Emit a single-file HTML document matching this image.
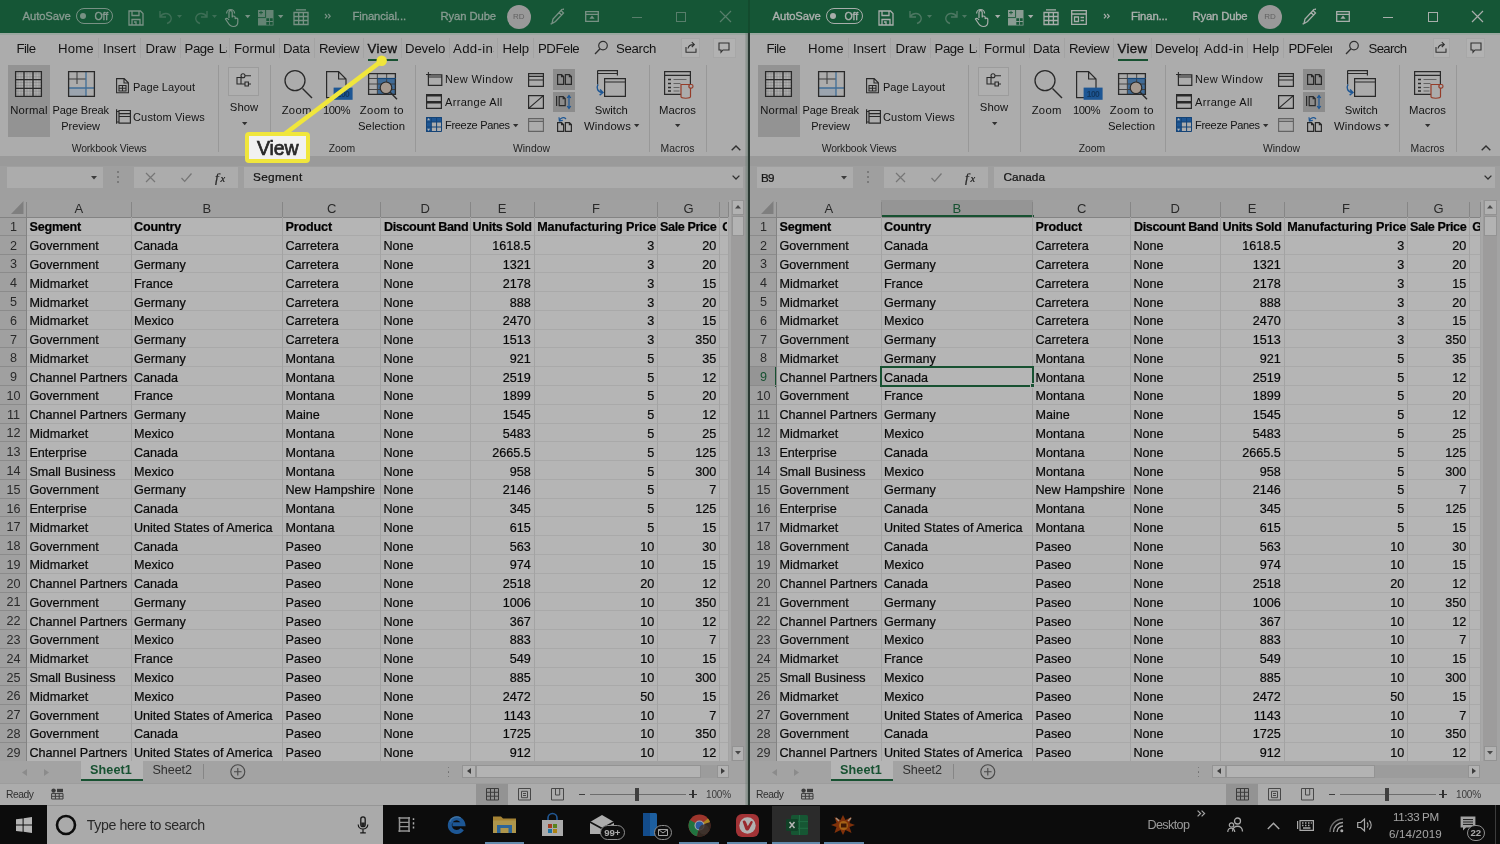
<!DOCTYPE html>
<html lang="en"><head><meta charset="utf-8"><title>Excel View Side by Side</title>
<style>
html,body{margin:0;padding:0;background:#000;}
body{width:1500px;height:844px;overflow:hidden;font-family:"Liberation Sans",sans-serif;}
#root{will-change:transform;position:relative;width:1500px;height:844px;overflow:hidden;background:#e6e6e6;}
.win{position:absolute;top:0;height:805px;overflow:hidden;background:#e6e6e6;}
.b{position:absolute;display:block;}
.t{position:absolute;white-space:nowrap;line-height:1;color:#262626;}
.ui{color:#1c1c1c;}
.g{color:#000;-webkit-text-stroke:0.22px #111;}
svg{overflow:visible}
</style></head><body><div id="root">
<div class="win" style="left:0px;width:748px">
<div class="b " style="left:0.00px;top:0.00px;width:748.00px;height:33.00px;background:#1e7a4c;"></div>
<span class="t " style="top:11.30px;font-size:11.30px;left:22.50px;letter-spacing:-0.094px;color:rgba(255,255,255,0.62);-webkit-text-stroke:0.3px rgba(255,255,255,0.62);">AutoSave</span>
<div class="b " style="left:76.30px;top:7.80px;width:37.20px;height:16.20px;border:1.600px solid rgba(255,255,255,0.62);border-radius:9px;box-sizing:border-box;"></div>
<div class="b " style="left:79.80px;top:12.90px;width:6.00px;height:6.00px;background:rgba(255,255,255,0.62);border-radius:50%;"></div>
<span class="t " style="top:11.47px;font-size:10.50px;left:94.50px;letter-spacing:-0.104px;color:rgba(255,255,255,0.62);-webkit-text-stroke:0.3px rgba(255,255,255,0.62);">Off</span>
<svg class="b" style="left:128.00px;top:9.50px;" width="16" height="16" viewBox="0 0 16 16"><path d="M1 1h11.5l2.5 2.5V15H1z M4 1v4.5h7V1 M4 15V9.5h8V15 M6 12h2v3" fill="none" stroke="rgba(255,255,255,0.62)" stroke-width="1.3"/></svg>
<svg class="b" style="left:158.00px;top:9.00px;" width="16" height="16" viewBox="0 0 16 16"><path d="M2 2v6h6 M2.5 7.5C5 3.5 11 3.5 13 8c1 3-1 5.5-4 6.5" fill="none" stroke="rgba(255,255,255,0.25)" stroke-width="1.4"/></svg>
<svg class="b" style="left:177.00px;top:14.50px;" width="6" height="4" viewBox="0 0 6 4"><path d="M0 0h5l-2.5 3z" fill="rgba(255,255,255,0.25)"/></svg>
<svg class="b" style="left:193.00px;top:9.00px;" width="16" height="16" viewBox="0 0 16 16"><path d="M14 2v6H8 M13.5 7.5C11 3.5 5 3.5 3 8c-1 3 1 5.5 4 6.5" fill="none" stroke="rgba(255,255,255,0.25)" stroke-width="1.4"/></svg>
<svg class="b" style="left:212.00px;top:14.50px;" width="6" height="4" viewBox="0 0 6 4"><path d="M0 0h5l-2.5 3z" fill="rgba(255,255,255,0.25)"/></svg>
<svg class="b" style="left:224.00px;top:9.00px;" width="14" height="18" viewBox="0 0 14 18"><path d="M5 9V3.2a1.6 1.6 0 0 1 3.2 0V8 M8.2 8.5a1.5 1.5 0 0 1 3 0V10a1.4 1.4 0 0 1 2.6 0v3c0 3-1.6 4.5-4.4 4.5S5 15.5 3.6 13.2L1.5 10c1-1.2 2.6-.6 3.5 1 M2.6 4.5a4 4 0 0 1 8 0" fill="none" stroke="rgba(255,255,255,0.62)" stroke-width="1.2"/></svg>
<svg class="b" style="left:245.00px;top:14.50px;" width="6" height="4" viewBox="0 0 6 4"><path d="M0 0h5.4l-2.7 3.2z" fill="rgba(255,255,255,0.62)"/></svg>
<svg class="b" style="left:257.50px;top:9.50px;" width="15.5" height="15.5" viewBox="0 0 15.5 15.5"><path d="M0 0h15.5v15.5H0z" fill="rgba(255,255,255,0.62)" opacity=".8"/><path d="M8.300 8.300h2.800v2.800H8.300z M11.900 8.300h2.800v2.800h-2.800z M8.300 11.900h2.800v2.800H8.300z M11.900 11.900h2.800v2.800h-2.800z" fill="#1e7a4c"/><path d="M1 2.600h4 M3 .8v3.600 M7.600 0v7.600H0" fill="none" stroke="#1e7a4c" stroke-width=".9"/></svg>
<svg class="b" style="left:278.00px;top:14.50px;" width="6" height="4" viewBox="0 0 6 4"><path d="M0 0h5.4l-2.7 3.2z" fill="rgba(255,255,255,0.62)"/></svg>
<svg class="b" style="left:293.00px;top:9.00px;" width="16" height="16" viewBox="0 0 16 16"><path d="M1 3.5h14v12H1z M1 7.5h14 M1 11.5h14 M5.7 3.5v12 M10.4 3.5v12 M3 .8h10" fill="none" stroke="rgba(255,255,255,0.62)" stroke-width="1.3"/></svg>
<svg class="b" style="left:325.00px;top:14.00px;" width="7" height="5" viewBox="0 0 7 5"><path d="M0 0l2 2.2L0 4.4 M3.2 0l2 2.2-2 2.2" fill="none" stroke="rgba(255,255,255,0.62)" stroke-width="1.2"/></svg>
<span class="t " style="top:11.30px;font-size:11.30px;left:352.50px;letter-spacing:-0.095px;color:rgba(255,255,255,0.62);-webkit-text-stroke:0.3px rgba(255,255,255,0.62);">Financial...</span>
<span class="t " style="top:11.30px;font-size:11.30px;left:440.50px;letter-spacing:-0.115px;color:rgba(255,255,255,0.62);-webkit-text-stroke:0.3px rgba(255,255,255,0.62);">Ryan Dube</span>
<div class="b " style="left:506.75px;top:4.50px;width:24.00px;height:24.00px;background:#d8d8d8;border-radius:50%;"></div>
<span class="t " style="top:13.12px;font-size:8.00px;left:518.75px;transform:translateX(-50%);color:#8a8a8a;">RD</span>
<svg class="b" style="left:549.00px;top:8.00px;" width="16" height="17" viewBox="0 0 16 17"><path d="M3 15.5l1-4.5L12 2.5l2.5 2.5L6.5 13.5z M10 4.5l2.5 2.5 M1.5 16l3-1 M12.5 1l.8 1.2 M14.5 .5l-.3 1.4" fill="none" stroke="rgba(255,255,255,0.62)" stroke-width="1.3"/></svg>
<svg class="b" style="left:584.50px;top:11.00px;" width="14" height="11" viewBox="0 0 14 11"><path d="M.7 .7h12.6v9.6H.7z M.7 3.4h12.6" fill="none" stroke="rgba(255,255,255,0.62)" stroke-width="1.3"/><path d="M7 4.6l2.6 3.2H4.4z" fill="rgba(255,255,255,0.62)"/></svg>
<div class="b " style="left:632.00px;top:16.50px;width:10.00px;height:1.20px;background:rgba(255,255,255,0.42);"></div>
<div class="b " style="left:676.00px;top:11.50px;width:10.00px;height:10.00px;border:1.2px solid rgba(255,255,255,0.42);box-sizing:border-box;"></div>
<svg class="b" style="left:720.25px;top:11.00px;" width="11" height="11" viewBox="0 0 11 11"><path d="M0 0l11 11M11 0L0 11" stroke="rgba(255,255,255,0.42)" stroke-width="1.2"/></svg>
<div class="b " style="left:0.00px;top:33.00px;width:748.00px;height:29.00px;background:#f3f3f3;"></div>
<div class="b " style="left:0.00px;top:33.00px;width:748.00px;height:1.60px;background:#d9ece2;"></div>
<span class="t ui" style="top:42.23px;font-size:13.20px;left:16.50px;letter-spacing:-0.568px;">File</span>
<span class="t ui" style="top:42.23px;font-size:13.20px;left:58.00px;letter-spacing:0.134px;">Home</span>
<span class="t ui" style="top:42.23px;font-size:13.20px;left:103.00px;letter-spacing:-0.002px;">Insert</span>
<span class="t ui" style="top:42.23px;font-size:13.20px;left:145.50px;letter-spacing:-0.076px;">Draw</span>
<div class="b" style="left:0;top:0;width:227.00px;height:844px;overflow:hidden">
<span class="t ui" style="top:42.23px;font-size:13.20px;left:184.50px;letter-spacing:-0.382px;word-spacing:1.7px;">Page Layout</span>
</div>
<div class="b" style="left:0;top:0;width:275.00px;height:844px;overflow:hidden">
<span class="t ui" style="top:42.23px;font-size:13.20px;left:234.00px;letter-spacing:0.038px;">Formulas</span>
</div>
<span class="t ui" style="top:42.23px;font-size:13.20px;left:283.00px;letter-spacing:-0.221px;">Data</span>
<span class="t ui" style="top:42.23px;font-size:13.20px;left:319.00px;letter-spacing:-0.547px;">Review</span>
<span class="t ui" style="top:42.23px;font-size:13.20px;left:367.50px;letter-spacing:0.407px;-webkit-text-stroke:0.35px #1c1c1c;">View</span>
<div class="b" style="left:0;top:0;width:445.60px;height:844px;overflow:hidden">
<span class="t ui" style="top:42.23px;font-size:13.20px;left:405.00px;letter-spacing:-0.132px;">Developer</span>
</div>
<div class="b" style="left:0;top:0;width:493.60px;height:844px;overflow:hidden">
<span class="t ui" style="top:42.23px;font-size:13.20px;left:453.00px;letter-spacing:0.357px;">Add-ins</span>
</div>
<span class="t ui" style="top:42.23px;font-size:13.20px;left:502.50px;letter-spacing:-0.162px;">Help</span>
<div class="b" style="left:0;top:0;width:579.60px;height:844px;overflow:hidden">
<span class="t ui" style="top:42.23px;font-size:13.20px;left:538.00px;letter-spacing:-0.453px;">PDFelement</span>
</div>
<div class="b " style="left:98.00px;top:38.00px;width:1.00px;height:20.00px;background:rgba(0,0,0,0.05);"></div>
<div class="b " style="left:140.00px;top:38.00px;width:1.00px;height:20.00px;background:rgba(0,0,0,0.05);"></div>
<div class="b " style="left:180.00px;top:38.00px;width:1.00px;height:20.00px;background:rgba(0,0,0,0.05);"></div>
<div class="b " style="left:229.00px;top:38.00px;width:1.00px;height:20.00px;background:rgba(0,0,0,0.05);"></div>
<div class="b " style="left:279.00px;top:38.00px;width:1.00px;height:20.00px;background:rgba(0,0,0,0.05);"></div>
<div class="b " style="left:314.00px;top:38.00px;width:1.00px;height:20.00px;background:rgba(0,0,0,0.05);"></div>
<div class="b " style="left:363.00px;top:38.00px;width:1.00px;height:20.00px;background:rgba(0,0,0,0.05);"></div>
<div class="b " style="left:401.00px;top:38.00px;width:1.00px;height:20.00px;background:rgba(0,0,0,0.05);"></div>
<div class="b " style="left:449.00px;top:38.00px;width:1.00px;height:20.00px;background:rgba(0,0,0,0.05);"></div>
<div class="b " style="left:497.00px;top:38.00px;width:1.00px;height:20.00px;background:rgba(0,0,0,0.05);"></div>
<div class="b " style="left:533.00px;top:38.00px;width:1.00px;height:20.00px;background:rgba(0,0,0,0.05);"></div>
<div class="b " style="left:367.50px;top:58.70px;width:30.00px;height:2.80px;background:#217346;"></div>
<svg class="b" style="left:594.00px;top:40.00px;" width="15" height="15" viewBox="0 0 15 15"><circle cx="9" cy="5.6" r="4.3" fill="none" stroke="#444" stroke-width="1.2"/><path d="M6 8.8L1 14" stroke="#444" stroke-width="1.3"/></svg>
<span class="t ui" style="top:41.93px;font-size:13.20px;left:616.00px;letter-spacing:-0.304px;">Search</span>
<div class="b " style="left:681.00px;top:37.50px;width:19.00px;height:20.00px;background:#fbfbfb;border:1px solid #ececec;box-sizing:border-box;"></div>
<svg class="b" style="left:684.50px;top:41.00px;" width="12" height="12" viewBox="0 0 12 12"><path d="M1 6v5.3h10V7.5 M3 7.5C3.5 4.5 6 3.6 8.5 3.6 M6.8 1.2L9.3 3.6 6.8 6" fill="none" stroke="#444" stroke-width="1.1"/></svg>
<div class="b " style="left:712.50px;top:37.50px;width:23.50px;height:20.00px;background:#fbfbfb;border:1px solid #ececec;box-sizing:border-box;"></div>
<svg class="b" style="left:718.25px;top:41.50px;" width="12" height="12" viewBox="0 0 12 12"><path d="M1 1h10v7H5L3 10.3V8H1z" fill="none" stroke="#444" stroke-width="1.1"/></svg>
<div class="b " style="left:0.00px;top:62.00px;width:748.00px;height:93.50px;background:#f3f3f3;"></div>
<div class="b " style="left:8.00px;top:65.30px;width:42.00px;height:71.50px;background:#d0d0d0;"></div>
<svg class="b" style="left:15.30px;top:71.30px;" width="27" height="26" viewBox="0 0 27 26"><rect x="0" y="0" width="27" height="26" fill="#f6f6f6"/><path d="M3 0v26 M0 2.88889h27" stroke="#a8a8a8" stroke-width=".4"/><path d="M6 0v26 M0 5.77778h27" stroke="#a8a8a8" stroke-width=".4"/><path d="M9 0v26 M0 8.66667h27" stroke="#a8a8a8" stroke-width=".4"/><path d="M12 0v26 M0 11.5556h27" stroke="#a8a8a8" stroke-width=".4"/><path d="M15 0v26 M0 14.4444h27" stroke="#a8a8a8" stroke-width=".4"/><path d="M18 0v26 M0 17.3333h27" stroke="#a8a8a8" stroke-width=".4"/><path d="M21 0v26 M0 20.2222h27" stroke="#a8a8a8" stroke-width=".4"/><path d="M24 0v26 M0 23.1111h27" stroke="#a8a8a8" stroke-width=".4"/><path d="M.6 .6h25.8v24.8H.6z M9 0v26 M18 0v26 M0 8.7h27 M0 17.3h27" fill="none" stroke="#3b3b3b" stroke-width="1.3"/></svg>
<span class="t ui" style="top:104.80px;font-size:11.30px;left:10.30px;letter-spacing:0.147px;">Normal</span>
<svg class="b" style="left:67.50px;top:71.30px;" width="27" height="26" viewBox="0 0 27 26"><rect width="27" height="26" fill="#f2f2f2"/><path d="M9 0v13 M0 8h18" stroke="#555" stroke-width="1"/><path d="M0 17h18v9H0z" fill="#dbe8f5"/><path d="M18 0v26 M0 17h27" stroke="#5b9bd5" stroke-width="1.300"/><path d="M.6 .6h25.8v24.8H.6z" fill="none" stroke="#3b3b3b" stroke-width="1.3"/></svg>
<span class="t ui" style="top:104.94px;font-size:11.00px;left:52.50px;letter-spacing:-0.098px;">Page Break</span>
<span class="t ui" style="top:120.74px;font-size:11.00px;left:61.30px;letter-spacing:-0.061px;">Preview</span>
<svg class="b" style="left:116.00px;top:78.00px;" width="13" height="15.5" viewBox="0 0 13 15.5"><path d="M.6 .6h7.6l4.2 4.2v10H.6z M8 .6v4.4h4.4 M3 7.5h7v5.5H3z M3 10.2h7 M6.5 7.5v5.5" fill="none" stroke="#3b3b3b" stroke-width="1.1"/></svg>
<span class="t ui" style="top:81.64px;font-size:11.00px;left:133.00px;letter-spacing:0.021px;">Page Layout</span>
<svg class="b" style="left:115.50px;top:109.00px;" width="15" height="15" viewBox="0 0 15 15"><path d="M3 1.5h11.4v12.6H3z M3 4.6h11.4 M3 7.5h11.4 M.6 .2v14.6 M.6 2.5H3 M.6 13H3" fill="none" stroke="#3b3b3b" stroke-width="1.2"/></svg>
<span class="t ui" style="top:111.64px;font-size:11.00px;left:133.00px;letter-spacing:0.158px;">Custom Views</span>
<span class="t ui" style="top:144.02px;font-size:10.40px;left:71.70px;letter-spacing:-0.148px;color:#333;">Workbook Views</span>
<div class="b " style="left:218.00px;top:65.00px;width:1.00px;height:87.00px;background:#d6d6d6;"></div>
<div class="b " style="left:228.00px;top:66.70px;width:31.00px;height:29.00px;background:#f7f7f7;border:1px solid #dcdcdc;box-sizing:border-box;"></div>
<svg class="b" style="left:236.00px;top:73.00px;" width="16" height="15" viewBox="0 0 16 15"><path d="M1 4.5h4V11H1z M5 2.8a2 2 0 1 0 4 0 2 2 0 1 0-4 0 M9.5 2.8H15 M5 11h4 M9 9h3.4v4H9z M12.6 11H15" fill="none" stroke="#3b3b3b" stroke-width="1.1"/></svg>
<span class="t ui" style="top:102.30px;font-size:11.30px;left:244.00px;transform:translateX(-50%);">Show</span>
<svg class="b" style="left:241.50px;top:121.50px;" width="5.4" height="3.4" viewBox="0 0 5.4 3.4"><path d="M0 0h5.4L2.7 3.2z" fill="#444"/></svg>
<div class="b " style="left:269.50px;top:65.00px;width:1.00px;height:87.00px;background:#d6d6d6;"></div>
<svg class="b" style="left:281.00px;top:68.00px;" width="33" height="33" viewBox="0 0 33 33"><circle cx="14" cy="12.6" r="10" fill="none" stroke="#3b3b3b" stroke-width="1.3"/><path d="M21.5 20.5L31 30" stroke="#3b3b3b" stroke-width="1.4"/></svg>
<span class="t ui" style="top:104.80px;font-size:11.30px;left:281.70px;letter-spacing:0.279px;">Zoom</span>
<svg class="b" style="left:325.80px;top:70.80px;" width="26" height="30" viewBox="0 0 26 30"><path d="M.6 .6h12l7.4 7.4v18.6H.6z M12.6 .6v7.4h7.4" fill="none" stroke="#3b3b3b" stroke-width="1.2"/><rect x="7.600" y="16.600" width="19" height="12.200" fill="#2a7ad1"/><text x="17" y="26" font-size="8.500" font-weight="700" text-anchor="middle" fill="#1a4f88" font-family="Liberation Sans, sans-serif" letter-spacing="-.5">100</text></svg>
<span class="t ui" style="top:104.80px;font-size:11.30px;left:323.00px;letter-spacing:-0.475px;">100%</span>
<svg class="b" style="left:368.00px;top:73.00px;" width="30" height="27" viewBox="0 0 30 27"><rect width="28" height="22" fill="#efefef"/><rect x="9.300" y="5.500" width="18.700" height="16.500" fill="#5b97d4"/><path d="M9.333 0v22" stroke="#555" stroke-width=".9"/><path d="M18.666 0v22" stroke="#555" stroke-width=".9"/><path d="M0 5.5h28" stroke="#555" stroke-width=".9"/><path d="M0 11h28" stroke="#555" stroke-width=".9"/><path d="M0 16.5h28" stroke="#555" stroke-width=".9"/><path d="M.6 .6h26.8v20.800H.6z" fill="none" stroke="#3b3b3b" stroke-width="1.300"/><path d="M9.300 5.500H28" fill="none" stroke="#1e64ad" stroke-width="1.200"/><circle cx="18" cy="14.800" r="5.800" fill="#ead8c8" stroke="#3b3b3b" stroke-width="1.200"/><path d="M22.200 19.200l6.800 7" stroke="#3b3b3b" stroke-width="1.400"/></svg>
<span class="t ui" style="top:104.80px;font-size:11.30px;left:359.70px;letter-spacing:0.407px;">Zoom to</span>
<span class="t ui" style="top:120.60px;font-size:11.30px;left:358.00px;letter-spacing:0.057px;">Selection</span>
<span class="t ui" style="top:144.02px;font-size:10.40px;left:328.80px;letter-spacing:-0.096px;color:#333;">Zoom</span>
<div class="b " style="left:415.00px;top:65.00px;width:1.00px;height:87.00px;background:#d6d6d6;"></div>
<svg class="b" style="left:425.50px;top:71.50px;" width="16.5" height="14" viewBox="0 0 16.5 14"><path d="M2.4 2.8h13.4v10.5H2.4z M2.4 5h13.4" fill="none" stroke="#3b3b3b" stroke-width="1.2"/><path d="M2.4 0v5 M0 2.5h5" stroke="#3b3b3b" stroke-width="1"/></svg>
<span class="t ui" style="top:74.24px;font-size:11.00px;left:445.00px;letter-spacing:0.381px;">New Window</span>
<svg class="b" style="left:426.00px;top:94.00px;" width="16" height="15" viewBox="0 0 16 15"><path d="M.6 .6h14.8v13.8H.6z M.6 7.5h14.8" fill="none" stroke="#3b3b3b" stroke-width="1.2"/><path d="M.6 1.6h14.8 M.6 8.6h14.8" stroke="#3b3b3b" stroke-width="2"/></svg>
<span class="t ui" style="top:96.94px;font-size:11.00px;left:445.00px;letter-spacing:0.335px;">Arrange All</span>
<svg class="b" style="left:426.00px;top:116.50px;" width="16" height="15" viewBox="0 0 16 15"><rect x="0" y="0" width="16" height="15" fill="#f4f4f4"/><rect x="0" y="0" width="16" height="5" fill="#2a7ad1"/><rect x="0" y="0" width="5.3" height="15" fill="#2a7ad1"/><path d="M5.3 0v15 M10.6 0v15 M0 5h16 M0 10h16" stroke="#1d5fa6" stroke-width="1"/><path d="M.5 .5h15v14H.5z" fill="none" stroke="#1d5fa6" stroke-width="1"/><path d="M1.2 3.3l1.4-2.2 1.4 2.2z M1.2 11.7l1.4 2.2 1.4-2.2z" fill="#fff"/></svg>
<span class="t ui" style="top:119.94px;font-size:11.00px;left:445.00px;letter-spacing:-0.307px;">Freeze Panes</span>
<svg class="b" style="left:513.00px;top:123.50px;" width="5.4" height="3.4" viewBox="0 0 5.4 3.4"><path d="M0 0h5.4L2.7 3.2z" fill="#444"/></svg>
<svg class="b" style="left:527.50px;top:72.50px;" width="16" height="14" viewBox="0 0 16 14"><path d="M.6 .6h14.8v12.8H.6z M.6 3.4h14.8 M.6 7h14.8" fill="none" stroke="#3b3b3b" stroke-width="1.2"/></svg>
<svg class="b" style="left:527.50px;top:95.00px;" width="16" height="14" viewBox="0 0 16 14"><path d="M.6 .6h14.8v12.8H.6z M.6 13.4L15.4 .6" fill="none" stroke="#3b3b3b" stroke-width="1.2"/></svg>
<svg class="b" style="left:527.50px;top:118.00px;" width="16" height="14" viewBox="0 0 16 14"><path d="M.6 .6h14.8v12.8H.6z M.6 3.4h14.8" fill="none" stroke="#8c8c8c" stroke-width="1.1"/></svg>
<div class="b " style="left:553.00px;top:69.00px;width:22.00px;height:20.50px;background:#c6c6c6;"></div>
<div class="b " style="left:553.00px;top:91.50px;width:22.00px;height:20.50px;background:#c6c6c6;"></div>
<svg class="b" style="left:557.00px;top:74.00px;" width="15" height="11" viewBox="0 0 15 11"><path d="M.6 .6h4l2 2v7.8H.6z M8.4 .6h4l2 2v7.8H8.4z M4.6 .6v2h2 M12.4 .6v2h2" fill="none" stroke="#3b3b3b" stroke-width="1.2"/></svg>
<svg class="b" style="left:556.00px;top:95.00px;" width="17" height="14" viewBox="0 0 17 14"><path d="M.6 1v10 M3.2 1.6h4l2 2v7H3.2z M7.2 1.6v2h2" fill="none" stroke="#3b3b3b" stroke-width="1.2"/><path d="M13 1v12 M11.2 3l1.8-2.4L14.8 3 M11.2 11l1.8 2.4 1.8-2.4" fill="none" stroke="#2a7ad1" stroke-width="1.2"/></svg>
<svg class="b" style="left:556.50px;top:116.00px;" width="16" height="16" viewBox="0 0 16 16"><path d="M.6 6.6h4l2 2v6.8H.6z M8.4 6.6h4l2 2v6.8H8.4z M4.6 6.6v2h2 M12.4 6.6v2h2" fill="none" stroke="#3b3b3b" stroke-width="1.2"/><path d="M2.5 4.8C3 1.5 7 .8 9 3 M2 1.2l.4 3.8 3.4-.6" fill="none" stroke="#2a7ad1" stroke-width="1.2"/></svg>
<svg class="b" style="left:595.00px;top:70.00px;" width="31" height="29" viewBox="0 0 31 29"><path d="M2.6 .6h19.8v5 M2.6 .6v14 M2.6 3.5h19.8" fill="none" stroke="#3b3b3b" stroke-width="1.2"/><path d="M9.6 8.6h20.8v17.8H9.6z M9.6 12h20.8" fill="#f1f1f1" stroke="#3b3b3b" stroke-width="1.2"/><path d="M3 14.5C1 18 2.5 22 7.5 22.5 M5 19.5l3 3-3.4 2.6" fill="none" stroke="#2a7ad1" stroke-width="1.4"/></svg>
<span class="t ui" style="top:104.80px;font-size:11.30px;left:594.80px;letter-spacing:-0.064px;">Switch</span>
<span class="t ui" style="top:120.60px;font-size:11.30px;left:584.00px;letter-spacing:0.166px;">Windows</span>
<svg class="b" style="left:634.30px;top:124.30px;" width="5.4" height="3.4" viewBox="0 0 5.4 3.4"><path d="M0 0h5.4L2.7 3.2z" fill="#444"/></svg>
<span class="t ui" style="top:144.02px;font-size:10.40px;left:513.00px;letter-spacing:0.002px;color:#333;">Window</span>
<div class="b " style="left:648.50px;top:65.00px;width:1.00px;height:87.00px;background:#d6d6d6;"></div>
<svg class="b" style="left:663.50px;top:71.00px;" width="30" height="29" viewBox="0 0 30 29"><path d="M.6 .6h25.8v22.8H.6z M.6 4.4h25.8" fill="none" stroke="#3b3b3b" stroke-width="1.2"/><path d="M4 8.5h3 M4 12.5h3 M4 16.5h3 M4 20h3" stroke="#3b3b3b" stroke-width="1.3"/><path d="M9.5 8.5h13 M9.5 12.5h7 M9.5 16.5h6 M9.5 20h6" stroke="#8a8a8a" stroke-width="1"/><path d="M17 13.5h10.5c2 0 2 3.6 0 3.6h-1v8.5c0 2.2-9.5 2.2-9.5 0z M26 13.6c-1.6 0-1.6 3.4 0 3.5" fill="#f3f3f3" stroke="#d2553a" stroke-width="1.2"/></svg>
<span class="t ui" style="top:104.80px;font-size:11.30px;left:659.00px;letter-spacing:-0.008px;">Macros</span>
<svg class="b" style="left:675.30px;top:124.30px;" width="5.4" height="3.4" viewBox="0 0 5.4 3.4"><path d="M0 0h5.4L2.7 3.2z" fill="#444"/></svg>
<span class="t ui" style="top:144.02px;font-size:10.40px;left:660.50px;letter-spacing:0.001px;color:#333;">Macros</span>
<div class="b " style="left:706.00px;top:65.00px;width:1.00px;height:87.00px;background:#d6d6d6;"></div>
<svg class="b" style="left:730.50px;top:144.50px;" width="10" height="6" viewBox="0 0 10 6"><path d="M.7 5.3L5 1l4.3 4.3" fill="none" stroke="#444" stroke-width="1.4"/></svg>
<div class="b " style="left:0.00px;top:155.50px;width:748.00px;height:45.00px;background:#e1e1e1;"></div>
<div class="b " style="left:0.00px;top:155.50px;width:748.00px;height:10.50px;background:#dadada;"></div>
<div class="b " style="left:5.50px;top:166.00px;width:98.00px;height:22.60px;background:#f2f2f2;border:1px solid #e0e0e0;box-sizing:border-box;"></div>
<svg class="b" style="left:91.00px;top:175.50px;" width="6" height="4" viewBox="0 0 6 4"><path d="M0 0h6L3 3.4z" fill="#555"/></svg>
<div class="b " style="left:117.00px;top:171.20px;width:2.20px;height:2.20px;background:#9a9a9a;border-radius:50%;"></div>
<div class="b " style="left:117.00px;top:176.20px;width:2.20px;height:2.20px;background:#9a9a9a;border-radius:50%;"></div>
<div class="b " style="left:117.00px;top:181.20px;width:2.20px;height:2.20px;background:#9a9a9a;border-radius:50%;"></div>
<div class="b " style="left:133.00px;top:166.00px;width:106.00px;height:22.60px;background:#f2f2f2;border:1px solid #e0e0e0;box-sizing:border-box;"></div>
<svg class="b" style="left:145.50px;top:172.50px;" width="9" height="9" viewBox="0 0 9 9"><path d="M0 0l9 9M9 0L0 9" stroke="#a6a6a6" stroke-width="1.2"/></svg>
<svg class="b" style="left:180.50px;top:172.50px;" width="11" height="9" viewBox="0 0 11 9"><path d="M.5 5l3.2 3.4L10.5 .5" fill="none" stroke="#a6a6a6" stroke-width="1.3"/></svg>
<span class="t g" style="top:170.79px;font-size:13.50px;left:215.00px;color:#444;font-family:'Liberation Serif',serif;font-style:italic;">f</span>
<span class="t g" style="top:173.67px;font-size:10.50px;left:220.50px;color:#444;font-family:'Liberation Serif',serif;font-style:italic;">x</span>
<div class="b " style="left:243.00px;top:166.00px;width:501.00px;height:22.60px;background:#f2f2f2;border:1px solid #e0e0e0;box-sizing:border-box;"></div>
<span class="t g" style="top:172.37px;font-size:11.80px;left:253.00px;letter-spacing:0.324px;color:#222;">Segment</span>
<svg class="b" style="left:731.50px;top:175.00px;" width="8" height="5" viewBox="0 0 8 5"><path d="M.6 .6L4 4l3.4-3.4" fill="none" stroke="#444" stroke-width="1.3"/></svg>
<div class="b " style="left:26.50px;top:216.55px;width:702.00px;height:544.47px;background:#fff;"></div>
<div class="b " style="left:0.00px;top:200.00px;width:728.50px;height:16.55px;background:#e2e2e2;"></div>
<div class="b " style="left:0.00px;top:216.55px;width:26.50px;height:544.47px;background:#e2e2e2;"></div>
<svg class="b" style="left:10.80px;top:201.00px;" width="12.5" height="13" viewBox="0 0 12.5 13"><path d="M12.5 0v13H0z" fill="#b4b4b4"/></svg>
<div class="b " style="left:0.00px;top:216.50px;width:728.50px;height:1.00px;background:#b9b9b9;"></div>
<div class="b " style="left:0.00px;top:234.83px;width:26.50px;height:1.00px;background:#c4c4c4;"></div>
<div class="b " style="left:26.50px;top:234.83px;width:702.00px;height:1.00px;background:#eeeeee;"></div>
<div class="b " style="left:0.00px;top:253.60px;width:26.50px;height:1.00px;background:#c4c4c4;"></div>
<div class="b " style="left:26.50px;top:253.60px;width:702.00px;height:1.00px;background:#eeeeee;"></div>
<div class="b " style="left:0.00px;top:272.38px;width:26.50px;height:1.00px;background:#c4c4c4;"></div>
<div class="b " style="left:26.50px;top:272.38px;width:702.00px;height:1.00px;background:#eeeeee;"></div>
<div class="b " style="left:0.00px;top:291.15px;width:26.50px;height:1.00px;background:#c4c4c4;"></div>
<div class="b " style="left:26.50px;top:291.15px;width:702.00px;height:1.00px;background:#eeeeee;"></div>
<div class="b " style="left:0.00px;top:309.93px;width:26.50px;height:1.00px;background:#c4c4c4;"></div>
<div class="b " style="left:26.50px;top:309.93px;width:702.00px;height:1.00px;background:#eeeeee;"></div>
<div class="b " style="left:0.00px;top:328.70px;width:26.50px;height:1.00px;background:#c4c4c4;"></div>
<div class="b " style="left:26.50px;top:328.70px;width:702.00px;height:1.00px;background:#eeeeee;"></div>
<div class="b " style="left:0.00px;top:347.48px;width:26.50px;height:1.00px;background:#c4c4c4;"></div>
<div class="b " style="left:26.50px;top:347.48px;width:702.00px;height:1.00px;background:#eeeeee;"></div>
<div class="b " style="left:0.00px;top:366.25px;width:26.50px;height:1.00px;background:#c4c4c4;"></div>
<div class="b " style="left:26.50px;top:366.25px;width:702.00px;height:1.00px;background:#eeeeee;"></div>
<div class="b " style="left:0.00px;top:385.02px;width:26.50px;height:1.00px;background:#c4c4c4;"></div>
<div class="b " style="left:26.50px;top:385.02px;width:702.00px;height:1.00px;background:#eeeeee;"></div>
<div class="b " style="left:0.00px;top:403.80px;width:26.50px;height:1.00px;background:#c4c4c4;"></div>
<div class="b " style="left:26.50px;top:403.80px;width:702.00px;height:1.00px;background:#eeeeee;"></div>
<div class="b " style="left:0.00px;top:422.57px;width:26.50px;height:1.00px;background:#c4c4c4;"></div>
<div class="b " style="left:26.50px;top:422.57px;width:702.00px;height:1.00px;background:#eeeeee;"></div>
<div class="b " style="left:0.00px;top:441.35px;width:26.50px;height:1.00px;background:#c4c4c4;"></div>
<div class="b " style="left:26.50px;top:441.35px;width:702.00px;height:1.00px;background:#eeeeee;"></div>
<div class="b " style="left:0.00px;top:460.12px;width:26.50px;height:1.00px;background:#c4c4c4;"></div>
<div class="b " style="left:26.50px;top:460.12px;width:702.00px;height:1.00px;background:#eeeeee;"></div>
<div class="b " style="left:0.00px;top:478.90px;width:26.50px;height:1.00px;background:#c4c4c4;"></div>
<div class="b " style="left:26.50px;top:478.90px;width:702.00px;height:1.00px;background:#eeeeee;"></div>
<div class="b " style="left:0.00px;top:497.68px;width:26.50px;height:1.00px;background:#c4c4c4;"></div>
<div class="b " style="left:26.50px;top:497.68px;width:702.00px;height:1.00px;background:#eeeeee;"></div>
<div class="b " style="left:0.00px;top:516.45px;width:26.50px;height:1.00px;background:#c4c4c4;"></div>
<div class="b " style="left:26.50px;top:516.45px;width:702.00px;height:1.00px;background:#eeeeee;"></div>
<div class="b " style="left:0.00px;top:535.22px;width:26.50px;height:1.00px;background:#c4c4c4;"></div>
<div class="b " style="left:26.50px;top:535.22px;width:702.00px;height:1.00px;background:#eeeeee;"></div>
<div class="b " style="left:0.00px;top:554.00px;width:26.50px;height:1.00px;background:#c4c4c4;"></div>
<div class="b " style="left:26.50px;top:554.00px;width:702.00px;height:1.00px;background:#eeeeee;"></div>
<div class="b " style="left:0.00px;top:572.77px;width:26.50px;height:1.00px;background:#c4c4c4;"></div>
<div class="b " style="left:26.50px;top:572.77px;width:702.00px;height:1.00px;background:#eeeeee;"></div>
<div class="b " style="left:0.00px;top:591.55px;width:26.50px;height:1.00px;background:#c4c4c4;"></div>
<div class="b " style="left:26.50px;top:591.55px;width:702.00px;height:1.00px;background:#eeeeee;"></div>
<div class="b " style="left:0.00px;top:610.33px;width:26.50px;height:1.00px;background:#c4c4c4;"></div>
<div class="b " style="left:26.50px;top:610.33px;width:702.00px;height:1.00px;background:#eeeeee;"></div>
<div class="b " style="left:0.00px;top:629.10px;width:26.50px;height:1.00px;background:#c4c4c4;"></div>
<div class="b " style="left:26.50px;top:629.10px;width:702.00px;height:1.00px;background:#eeeeee;"></div>
<div class="b " style="left:0.00px;top:647.88px;width:26.50px;height:1.00px;background:#c4c4c4;"></div>
<div class="b " style="left:26.50px;top:647.88px;width:702.00px;height:1.00px;background:#eeeeee;"></div>
<div class="b " style="left:0.00px;top:666.65px;width:26.50px;height:1.00px;background:#c4c4c4;"></div>
<div class="b " style="left:26.50px;top:666.65px;width:702.00px;height:1.00px;background:#eeeeee;"></div>
<div class="b " style="left:0.00px;top:685.42px;width:26.50px;height:1.00px;background:#c4c4c4;"></div>
<div class="b " style="left:26.50px;top:685.42px;width:702.00px;height:1.00px;background:#eeeeee;"></div>
<div class="b " style="left:0.00px;top:704.20px;width:26.50px;height:1.00px;background:#c4c4c4;"></div>
<div class="b " style="left:26.50px;top:704.20px;width:702.00px;height:1.00px;background:#eeeeee;"></div>
<div class="b " style="left:0.00px;top:722.97px;width:26.50px;height:1.00px;background:#c4c4c4;"></div>
<div class="b " style="left:26.50px;top:722.97px;width:702.00px;height:1.00px;background:#eeeeee;"></div>
<div class="b " style="left:0.00px;top:741.75px;width:26.50px;height:1.00px;background:#c4c4c4;"></div>
<div class="b " style="left:26.50px;top:741.75px;width:702.00px;height:1.00px;background:#eeeeee;"></div>
<div class="b " style="left:0.00px;top:760.52px;width:26.50px;height:1.00px;background:#c4c4c4;"></div>
<div class="b " style="left:26.50px;top:760.52px;width:702.00px;height:1.00px;background:#eeeeee;"></div>
<div class="b " style="left:26.00px;top:202.00px;width:1.00px;height:14.55px;background:#b9b9b9;"></div>
<div class="b " style="left:26.00px;top:216.55px;width:1.00px;height:544.47px;background:#b9b9b9;"></div>
<div class="b " style="left:130.50px;top:202.00px;width:1.00px;height:14.55px;background:#bdbdbd;"></div>
<div class="b " style="left:130.50px;top:216.55px;width:1.00px;height:544.47px;background:#e6e6e6;"></div>
<div class="b " style="left:282.10px;top:202.00px;width:1.00px;height:14.55px;background:#bdbdbd;"></div>
<div class="b " style="left:282.10px;top:216.55px;width:1.00px;height:544.47px;background:#e6e6e6;"></div>
<div class="b " style="left:380.10px;top:202.00px;width:1.00px;height:14.55px;background:#bdbdbd;"></div>
<div class="b " style="left:380.10px;top:216.55px;width:1.00px;height:544.47px;background:#e6e6e6;"></div>
<div class="b " style="left:469.50px;top:202.00px;width:1.00px;height:14.55px;background:#bdbdbd;"></div>
<div class="b " style="left:469.50px;top:216.55px;width:1.00px;height:544.47px;background:#e6e6e6;"></div>
<div class="b " style="left:533.70px;top:202.00px;width:1.00px;height:14.55px;background:#bdbdbd;"></div>
<div class="b " style="left:533.70px;top:216.55px;width:1.00px;height:544.47px;background:#e6e6e6;"></div>
<div class="b " style="left:657.10px;top:202.00px;width:1.00px;height:14.55px;background:#bdbdbd;"></div>
<div class="b " style="left:657.10px;top:216.55px;width:1.00px;height:544.47px;background:#e6e6e6;"></div>
<div class="b " style="left:719.10px;top:202.00px;width:1.00px;height:14.55px;background:#bdbdbd;"></div>
<div class="b " style="left:719.10px;top:216.55px;width:1.00px;height:544.47px;background:#e6e6e6;"></div>
<div class="b " style="left:728.00px;top:202.00px;width:1.00px;height:14.55px;background:#bdbdbd;"></div>
<div class="b " style="left:728.00px;top:216.55px;width:1.00px;height:544.47px;background:#e6e6e6;"></div>
<div class="b " style="left:0.00px;top:760.52px;width:728.50px;height:1.00px;background:#b0b0b0;"></div>
<span class="t " style="top:202.22px;font-size:13.00px;left:78.75px;transform:translateX(-50%);color:#3a3a3a;">A</span>
<span class="t " style="top:202.22px;font-size:13.00px;left:206.80px;transform:translateX(-50%);color:#3a3a3a;">B</span>
<span class="t " style="top:202.22px;font-size:13.00px;left:331.60px;transform:translateX(-50%);color:#3a3a3a;">C</span>
<span class="t " style="top:202.22px;font-size:13.00px;left:425.30px;transform:translateX(-50%);color:#3a3a3a;">D</span>
<span class="t " style="top:202.22px;font-size:13.00px;left:502.10px;transform:translateX(-50%);color:#3a3a3a;">E</span>
<span class="t " style="top:202.22px;font-size:13.00px;left:595.90px;transform:translateX(-50%);color:#3a3a3a;">F</span>
<span class="t " style="top:202.22px;font-size:13.00px;left:688.60px;transform:translateX(-50%);color:#3a3a3a;">G</span>
<span class="t " style="top:220.94px;font-size:12.60px;left:13.45px;transform:translateX(-50%);color:#3a3a3a;">1</span>
<span class="t g" style="top:221.44px;font-size:12.60px;left:29.60px;letter-spacing:-0.259px;font-weight:700;color:#000;">Segment</span>
<span class="t g" style="top:221.44px;font-size:12.60px;left:134.00px;letter-spacing:-0.185px;font-weight:700;color:#000;">Country</span>
<span class="t g" style="top:221.44px;font-size:12.60px;left:285.50px;letter-spacing:-0.157px;font-weight:700;color:#000;">Product</span>
<span class="t g" style="top:221.44px;font-size:12.60px;left:383.90px;letter-spacing:-0.346px;font-weight:700;color:#000;">Discount Band</span>
<span class="t g" style="top:221.44px;font-size:12.60px;left:472.60px;letter-spacing:-0.330px;font-weight:700;color:#000;">Units Sold</span>
<span class="t g" style="top:221.44px;font-size:12.60px;left:537.20px;letter-spacing:-0.107px;font-weight:700;color:#000;">Manufacturing Price</span>
<span class="t g" style="top:221.44px;font-size:12.60px;left:660.10px;letter-spacing:-0.404px;font-weight:700;color:#000;">Sale Price</span>
<span class="t " style="top:239.72px;font-size:12.60px;left:13.45px;transform:translateX(-50%);color:#3a3a3a;">2</span>
<span class="t g" style="top:240.22px;font-size:12.60px;left:29.40px;color:#0c0c0c;">Government</span>
<span class="t g" style="top:240.22px;font-size:12.60px;left:133.90px;color:#0c0c0c;">Canada</span>
<span class="t g" style="top:240.22px;font-size:12.60px;left:285.50px;color:#0c0c0c;">Carretera</span>
<span class="t g" style="top:240.22px;font-size:12.60px;left:383.50px;color:#0c0c0c;">None</span>
<span class="t g" style="top:240.22px;font-size:12.60px;left:492.26px;color:#0c0c0c;">1618.5</span>
<span class="t g" style="top:240.22px;font-size:12.60px;left:647.19px;color:#0c0c0c;">3</span>
<span class="t g" style="top:240.22px;font-size:12.60px;left:702.18px;color:#0c0c0c;">20</span>
<span class="t " style="top:258.49px;font-size:12.60px;left:13.45px;transform:translateX(-50%);color:#3a3a3a;">3</span>
<span class="t g" style="top:258.99px;font-size:12.60px;left:29.40px;color:#0c0c0c;">Government</span>
<span class="t g" style="top:258.99px;font-size:12.60px;left:133.90px;color:#0c0c0c;">Germany</span>
<span class="t g" style="top:258.99px;font-size:12.60px;left:285.50px;color:#0c0c0c;">Carretera</span>
<span class="t g" style="top:258.99px;font-size:12.60px;left:383.50px;color:#0c0c0c;">None</span>
<span class="t g" style="top:258.99px;font-size:12.60px;left:502.77px;color:#0c0c0c;">1321</span>
<span class="t g" style="top:258.99px;font-size:12.60px;left:647.19px;color:#0c0c0c;">3</span>
<span class="t g" style="top:258.99px;font-size:12.60px;left:702.18px;color:#0c0c0c;">20</span>
<span class="t " style="top:277.27px;font-size:12.60px;left:13.45px;transform:translateX(-50%);color:#3a3a3a;">4</span>
<span class="t g" style="top:277.77px;font-size:12.60px;left:29.40px;color:#0c0c0c;">Midmarket</span>
<span class="t g" style="top:277.77px;font-size:12.60px;left:133.90px;color:#0c0c0c;">France</span>
<span class="t g" style="top:277.77px;font-size:12.60px;left:285.50px;color:#0c0c0c;">Carretera</span>
<span class="t g" style="top:277.77px;font-size:12.60px;left:383.50px;color:#0c0c0c;">None</span>
<span class="t g" style="top:277.77px;font-size:12.60px;left:502.77px;color:#0c0c0c;">2178</span>
<span class="t g" style="top:277.77px;font-size:12.60px;left:647.19px;color:#0c0c0c;">3</span>
<span class="t g" style="top:277.77px;font-size:12.60px;left:702.18px;color:#0c0c0c;">15</span>
<span class="t " style="top:296.04px;font-size:12.60px;left:13.45px;transform:translateX(-50%);color:#3a3a3a;">5</span>
<span class="t g" style="top:296.54px;font-size:12.60px;left:29.40px;color:#0c0c0c;">Midmarket</span>
<span class="t g" style="top:296.54px;font-size:12.60px;left:133.90px;color:#0c0c0c;">Germany</span>
<span class="t g" style="top:296.54px;font-size:12.60px;left:285.50px;color:#0c0c0c;">Carretera</span>
<span class="t g" style="top:296.54px;font-size:12.60px;left:383.50px;color:#0c0c0c;">None</span>
<span class="t g" style="top:296.54px;font-size:12.60px;left:509.78px;color:#0c0c0c;">888</span>
<span class="t g" style="top:296.54px;font-size:12.60px;left:647.19px;color:#0c0c0c;">3</span>
<span class="t g" style="top:296.54px;font-size:12.60px;left:702.18px;color:#0c0c0c;">20</span>
<span class="t " style="top:314.82px;font-size:12.60px;left:13.45px;transform:translateX(-50%);color:#3a3a3a;">6</span>
<span class="t g" style="top:315.32px;font-size:12.60px;left:29.40px;color:#0c0c0c;">Midmarket</span>
<span class="t g" style="top:315.32px;font-size:12.60px;left:133.90px;color:#0c0c0c;">Mexico</span>
<span class="t g" style="top:315.32px;font-size:12.60px;left:285.50px;color:#0c0c0c;">Carretera</span>
<span class="t g" style="top:315.32px;font-size:12.60px;left:383.50px;color:#0c0c0c;">None</span>
<span class="t g" style="top:315.32px;font-size:12.60px;left:502.77px;color:#0c0c0c;">2470</span>
<span class="t g" style="top:315.32px;font-size:12.60px;left:647.19px;color:#0c0c0c;">3</span>
<span class="t g" style="top:315.32px;font-size:12.60px;left:702.18px;color:#0c0c0c;">15</span>
<span class="t " style="top:333.59px;font-size:12.60px;left:13.45px;transform:translateX(-50%);color:#3a3a3a;">7</span>
<span class="t g" style="top:334.09px;font-size:12.60px;left:29.40px;color:#0c0c0c;">Government</span>
<span class="t g" style="top:334.09px;font-size:12.60px;left:133.90px;color:#0c0c0c;">Germany</span>
<span class="t g" style="top:334.09px;font-size:12.60px;left:285.50px;color:#0c0c0c;">Carretera</span>
<span class="t g" style="top:334.09px;font-size:12.60px;left:383.50px;color:#0c0c0c;">None</span>
<span class="t g" style="top:334.09px;font-size:12.60px;left:502.77px;color:#0c0c0c;">1513</span>
<span class="t g" style="top:334.09px;font-size:12.60px;left:647.19px;color:#0c0c0c;">3</span>
<span class="t g" style="top:334.09px;font-size:12.60px;left:695.18px;color:#0c0c0c;">350</span>
<span class="t " style="top:352.37px;font-size:12.60px;left:13.45px;transform:translateX(-50%);color:#3a3a3a;">8</span>
<span class="t g" style="top:352.87px;font-size:12.60px;left:29.40px;color:#0c0c0c;">Midmarket</span>
<span class="t g" style="top:352.87px;font-size:12.60px;left:133.90px;color:#0c0c0c;">Germany</span>
<span class="t g" style="top:352.87px;font-size:12.60px;left:285.50px;color:#0c0c0c;">Montana</span>
<span class="t g" style="top:352.87px;font-size:12.60px;left:383.50px;color:#0c0c0c;">None</span>
<span class="t g" style="top:352.87px;font-size:12.60px;left:509.78px;color:#0c0c0c;">921</span>
<span class="t g" style="top:352.87px;font-size:12.60px;left:647.19px;color:#0c0c0c;">5</span>
<span class="t g" style="top:352.87px;font-size:12.60px;left:702.18px;color:#0c0c0c;">35</span>
<span class="t " style="top:371.14px;font-size:12.60px;left:13.45px;transform:translateX(-50%);color:#3a3a3a;">9</span>
<span class="t g" style="top:371.64px;font-size:12.60px;left:29.40px;color:#0c0c0c;">Channel Partners</span>
<span class="t g" style="top:371.64px;font-size:12.60px;left:133.90px;color:#0c0c0c;">Canada</span>
<span class="t g" style="top:371.64px;font-size:12.60px;left:285.50px;color:#0c0c0c;">Montana</span>
<span class="t g" style="top:371.64px;font-size:12.60px;left:383.50px;color:#0c0c0c;">None</span>
<span class="t g" style="top:371.64px;font-size:12.60px;left:502.77px;color:#0c0c0c;">2519</span>
<span class="t g" style="top:371.64px;font-size:12.60px;left:647.19px;color:#0c0c0c;">5</span>
<span class="t g" style="top:371.64px;font-size:12.60px;left:702.18px;color:#0c0c0c;">12</span>
<span class="t " style="top:389.92px;font-size:12.60px;left:13.45px;transform:translateX(-50%);color:#3a3a3a;">10</span>
<span class="t g" style="top:390.42px;font-size:12.60px;left:29.40px;color:#0c0c0c;">Government</span>
<span class="t g" style="top:390.42px;font-size:12.60px;left:133.90px;color:#0c0c0c;">France</span>
<span class="t g" style="top:390.42px;font-size:12.60px;left:285.50px;color:#0c0c0c;">Montana</span>
<span class="t g" style="top:390.42px;font-size:12.60px;left:383.50px;color:#0c0c0c;">None</span>
<span class="t g" style="top:390.42px;font-size:12.60px;left:502.77px;color:#0c0c0c;">1899</span>
<span class="t g" style="top:390.42px;font-size:12.60px;left:647.19px;color:#0c0c0c;">5</span>
<span class="t g" style="top:390.42px;font-size:12.60px;left:702.18px;color:#0c0c0c;">20</span>
<span class="t " style="top:408.69px;font-size:12.60px;left:13.45px;transform:translateX(-50%);color:#3a3a3a;">11</span>
<span class="t g" style="top:409.19px;font-size:12.60px;left:29.40px;color:#0c0c0c;">Channel Partners</span>
<span class="t g" style="top:409.19px;font-size:12.60px;left:133.90px;color:#0c0c0c;">Germany</span>
<span class="t g" style="top:409.19px;font-size:12.60px;left:285.50px;color:#0c0c0c;">Maine</span>
<span class="t g" style="top:409.19px;font-size:12.60px;left:383.50px;color:#0c0c0c;">None</span>
<span class="t g" style="top:409.19px;font-size:12.60px;left:502.77px;color:#0c0c0c;">1545</span>
<span class="t g" style="top:409.19px;font-size:12.60px;left:647.19px;color:#0c0c0c;">5</span>
<span class="t g" style="top:409.19px;font-size:12.60px;left:702.18px;color:#0c0c0c;">12</span>
<span class="t " style="top:427.47px;font-size:12.60px;left:13.45px;transform:translateX(-50%);color:#3a3a3a;">12</span>
<span class="t g" style="top:427.97px;font-size:12.60px;left:29.40px;color:#0c0c0c;">Midmarket</span>
<span class="t g" style="top:427.97px;font-size:12.60px;left:133.90px;color:#0c0c0c;">Mexico</span>
<span class="t g" style="top:427.97px;font-size:12.60px;left:285.50px;color:#0c0c0c;">Montana</span>
<span class="t g" style="top:427.97px;font-size:12.60px;left:383.50px;color:#0c0c0c;">None</span>
<span class="t g" style="top:427.97px;font-size:12.60px;left:502.77px;color:#0c0c0c;">5483</span>
<span class="t g" style="top:427.97px;font-size:12.60px;left:647.19px;color:#0c0c0c;">5</span>
<span class="t g" style="top:427.97px;font-size:12.60px;left:702.18px;color:#0c0c0c;">25</span>
<span class="t " style="top:446.24px;font-size:12.60px;left:13.45px;transform:translateX(-50%);color:#3a3a3a;">13</span>
<span class="t g" style="top:446.74px;font-size:12.60px;left:29.40px;color:#0c0c0c;">Enterprise</span>
<span class="t g" style="top:446.74px;font-size:12.60px;left:133.90px;color:#0c0c0c;">Canada</span>
<span class="t g" style="top:446.74px;font-size:12.60px;left:285.50px;color:#0c0c0c;">Montana</span>
<span class="t g" style="top:446.74px;font-size:12.60px;left:383.50px;color:#0c0c0c;">None</span>
<span class="t g" style="top:446.74px;font-size:12.60px;left:492.26px;color:#0c0c0c;">2665.5</span>
<span class="t g" style="top:446.74px;font-size:12.60px;left:647.19px;color:#0c0c0c;">5</span>
<span class="t g" style="top:446.74px;font-size:12.60px;left:695.18px;color:#0c0c0c;">125</span>
<span class="t " style="top:465.02px;font-size:12.60px;left:13.45px;transform:translateX(-50%);color:#3a3a3a;">14</span>
<span class="t g" style="top:465.52px;font-size:12.60px;left:29.40px;color:#0c0c0c;">Small Business</span>
<span class="t g" style="top:465.52px;font-size:12.60px;left:133.90px;color:#0c0c0c;">Mexico</span>
<span class="t g" style="top:465.52px;font-size:12.60px;left:285.50px;color:#0c0c0c;">Montana</span>
<span class="t g" style="top:465.52px;font-size:12.60px;left:383.50px;color:#0c0c0c;">None</span>
<span class="t g" style="top:465.52px;font-size:12.60px;left:509.78px;color:#0c0c0c;">958</span>
<span class="t g" style="top:465.52px;font-size:12.60px;left:647.19px;color:#0c0c0c;">5</span>
<span class="t g" style="top:465.52px;font-size:12.60px;left:695.18px;color:#0c0c0c;">300</span>
<span class="t " style="top:483.79px;font-size:12.60px;left:13.45px;transform:translateX(-50%);color:#3a3a3a;">15</span>
<span class="t g" style="top:484.29px;font-size:12.60px;left:29.40px;color:#0c0c0c;">Government</span>
<span class="t g" style="top:484.29px;font-size:12.60px;left:133.90px;color:#0c0c0c;">Germany</span>
<span class="t g" style="top:484.29px;font-size:12.60px;left:285.50px;color:#0c0c0c;">New Hampshire</span>
<span class="t g" style="top:484.29px;font-size:12.60px;left:383.50px;color:#0c0c0c;">None</span>
<span class="t g" style="top:484.29px;font-size:12.60px;left:502.77px;color:#0c0c0c;">2146</span>
<span class="t g" style="top:484.29px;font-size:12.60px;left:647.19px;color:#0c0c0c;">5</span>
<span class="t g" style="top:484.29px;font-size:12.60px;left:709.19px;color:#0c0c0c;">7</span>
<span class="t " style="top:502.57px;font-size:12.60px;left:13.45px;transform:translateX(-50%);color:#3a3a3a;">16</span>
<span class="t g" style="top:503.07px;font-size:12.60px;left:29.40px;color:#0c0c0c;">Enterprise</span>
<span class="t g" style="top:503.07px;font-size:12.60px;left:133.90px;color:#0c0c0c;">Canada</span>
<span class="t g" style="top:503.07px;font-size:12.60px;left:285.50px;color:#0c0c0c;">Montana</span>
<span class="t g" style="top:503.07px;font-size:12.60px;left:383.50px;color:#0c0c0c;">None</span>
<span class="t g" style="top:503.07px;font-size:12.60px;left:509.78px;color:#0c0c0c;">345</span>
<span class="t g" style="top:503.07px;font-size:12.60px;left:647.19px;color:#0c0c0c;">5</span>
<span class="t g" style="top:503.07px;font-size:12.60px;left:695.18px;color:#0c0c0c;">125</span>
<span class="t " style="top:521.34px;font-size:12.60px;left:13.45px;transform:translateX(-50%);color:#3a3a3a;">17</span>
<span class="t g" style="top:521.84px;font-size:12.60px;left:29.40px;color:#0c0c0c;">Midmarket</span>
<span class="t g" style="top:521.84px;font-size:12.60px;left:133.90px;color:#0c0c0c;">United States of America</span>
<span class="t g" style="top:521.84px;font-size:12.60px;left:285.50px;color:#0c0c0c;">Montana</span>
<span class="t g" style="top:521.84px;font-size:12.60px;left:383.50px;color:#0c0c0c;">None</span>
<span class="t g" style="top:521.84px;font-size:12.60px;left:509.78px;color:#0c0c0c;">615</span>
<span class="t g" style="top:521.84px;font-size:12.60px;left:647.19px;color:#0c0c0c;">5</span>
<span class="t g" style="top:521.84px;font-size:12.60px;left:702.18px;color:#0c0c0c;">15</span>
<span class="t " style="top:540.12px;font-size:12.60px;left:13.45px;transform:translateX(-50%);color:#3a3a3a;">18</span>
<span class="t g" style="top:540.62px;font-size:12.60px;left:29.40px;color:#0c0c0c;">Government</span>
<span class="t g" style="top:540.62px;font-size:12.60px;left:133.90px;color:#0c0c0c;">Canada</span>
<span class="t g" style="top:540.62px;font-size:12.60px;left:285.50px;color:#0c0c0c;">Paseo</span>
<span class="t g" style="top:540.62px;font-size:12.60px;left:383.50px;color:#0c0c0c;">None</span>
<span class="t g" style="top:540.62px;font-size:12.60px;left:509.78px;color:#0c0c0c;">563</span>
<span class="t g" style="top:540.62px;font-size:12.60px;left:640.18px;color:#0c0c0c;">10</span>
<span class="t g" style="top:540.62px;font-size:12.60px;left:702.18px;color:#0c0c0c;">30</span>
<span class="t " style="top:558.89px;font-size:12.60px;left:13.45px;transform:translateX(-50%);color:#3a3a3a;">19</span>
<span class="t g" style="top:559.39px;font-size:12.60px;left:29.40px;color:#0c0c0c;">Midmarket</span>
<span class="t g" style="top:559.39px;font-size:12.60px;left:133.90px;color:#0c0c0c;">Mexico</span>
<span class="t g" style="top:559.39px;font-size:12.60px;left:285.50px;color:#0c0c0c;">Paseo</span>
<span class="t g" style="top:559.39px;font-size:12.60px;left:383.50px;color:#0c0c0c;">None</span>
<span class="t g" style="top:559.39px;font-size:12.60px;left:509.78px;color:#0c0c0c;">974</span>
<span class="t g" style="top:559.39px;font-size:12.60px;left:640.18px;color:#0c0c0c;">10</span>
<span class="t g" style="top:559.39px;font-size:12.60px;left:702.18px;color:#0c0c0c;">15</span>
<span class="t " style="top:577.67px;font-size:12.60px;left:13.45px;transform:translateX(-50%);color:#3a3a3a;">20</span>
<span class="t g" style="top:578.17px;font-size:12.60px;left:29.40px;color:#0c0c0c;">Channel Partners</span>
<span class="t g" style="top:578.17px;font-size:12.60px;left:133.90px;color:#0c0c0c;">Canada</span>
<span class="t g" style="top:578.17px;font-size:12.60px;left:285.50px;color:#0c0c0c;">Paseo</span>
<span class="t g" style="top:578.17px;font-size:12.60px;left:383.50px;color:#0c0c0c;">None</span>
<span class="t g" style="top:578.17px;font-size:12.60px;left:502.77px;color:#0c0c0c;">2518</span>
<span class="t g" style="top:578.17px;font-size:12.60px;left:640.18px;color:#0c0c0c;">20</span>
<span class="t g" style="top:578.17px;font-size:12.60px;left:702.18px;color:#0c0c0c;">12</span>
<span class="t " style="top:596.44px;font-size:12.60px;left:13.45px;transform:translateX(-50%);color:#3a3a3a;">21</span>
<span class="t g" style="top:596.94px;font-size:12.60px;left:29.40px;color:#0c0c0c;">Government</span>
<span class="t g" style="top:596.94px;font-size:12.60px;left:133.90px;color:#0c0c0c;">Germany</span>
<span class="t g" style="top:596.94px;font-size:12.60px;left:285.50px;color:#0c0c0c;">Paseo</span>
<span class="t g" style="top:596.94px;font-size:12.60px;left:383.50px;color:#0c0c0c;">None</span>
<span class="t g" style="top:596.94px;font-size:12.60px;left:502.77px;color:#0c0c0c;">1006</span>
<span class="t g" style="top:596.94px;font-size:12.60px;left:640.18px;color:#0c0c0c;">10</span>
<span class="t g" style="top:596.94px;font-size:12.60px;left:695.18px;color:#0c0c0c;">350</span>
<span class="t " style="top:615.22px;font-size:12.60px;left:13.45px;transform:translateX(-50%);color:#3a3a3a;">22</span>
<span class="t g" style="top:615.72px;font-size:12.60px;left:29.40px;color:#0c0c0c;">Channel Partners</span>
<span class="t g" style="top:615.72px;font-size:12.60px;left:133.90px;color:#0c0c0c;">Germany</span>
<span class="t g" style="top:615.72px;font-size:12.60px;left:285.50px;color:#0c0c0c;">Paseo</span>
<span class="t g" style="top:615.72px;font-size:12.60px;left:383.50px;color:#0c0c0c;">None</span>
<span class="t g" style="top:615.72px;font-size:12.60px;left:509.78px;color:#0c0c0c;">367</span>
<span class="t g" style="top:615.72px;font-size:12.60px;left:640.18px;color:#0c0c0c;">10</span>
<span class="t g" style="top:615.72px;font-size:12.60px;left:702.18px;color:#0c0c0c;">12</span>
<span class="t " style="top:633.99px;font-size:12.60px;left:13.45px;transform:translateX(-50%);color:#3a3a3a;">23</span>
<span class="t g" style="top:634.49px;font-size:12.60px;left:29.40px;color:#0c0c0c;">Government</span>
<span class="t g" style="top:634.49px;font-size:12.60px;left:133.90px;color:#0c0c0c;">Mexico</span>
<span class="t g" style="top:634.49px;font-size:12.60px;left:285.50px;color:#0c0c0c;">Paseo</span>
<span class="t g" style="top:634.49px;font-size:12.60px;left:383.50px;color:#0c0c0c;">None</span>
<span class="t g" style="top:634.49px;font-size:12.60px;left:509.78px;color:#0c0c0c;">883</span>
<span class="t g" style="top:634.49px;font-size:12.60px;left:640.18px;color:#0c0c0c;">10</span>
<span class="t g" style="top:634.49px;font-size:12.60px;left:709.19px;color:#0c0c0c;">7</span>
<span class="t " style="top:652.77px;font-size:12.60px;left:13.45px;transform:translateX(-50%);color:#3a3a3a;">24</span>
<span class="t g" style="top:653.27px;font-size:12.60px;left:29.40px;color:#0c0c0c;">Midmarket</span>
<span class="t g" style="top:653.27px;font-size:12.60px;left:133.90px;color:#0c0c0c;">France</span>
<span class="t g" style="top:653.27px;font-size:12.60px;left:285.50px;color:#0c0c0c;">Paseo</span>
<span class="t g" style="top:653.27px;font-size:12.60px;left:383.50px;color:#0c0c0c;">None</span>
<span class="t g" style="top:653.27px;font-size:12.60px;left:509.78px;color:#0c0c0c;">549</span>
<span class="t g" style="top:653.27px;font-size:12.60px;left:640.18px;color:#0c0c0c;">10</span>
<span class="t g" style="top:653.27px;font-size:12.60px;left:702.18px;color:#0c0c0c;">15</span>
<span class="t " style="top:671.54px;font-size:12.60px;left:13.45px;transform:translateX(-50%);color:#3a3a3a;">25</span>
<span class="t g" style="top:672.04px;font-size:12.60px;left:29.40px;color:#0c0c0c;">Small Business</span>
<span class="t g" style="top:672.04px;font-size:12.60px;left:133.90px;color:#0c0c0c;">Mexico</span>
<span class="t g" style="top:672.04px;font-size:12.60px;left:285.50px;color:#0c0c0c;">Paseo</span>
<span class="t g" style="top:672.04px;font-size:12.60px;left:383.50px;color:#0c0c0c;">None</span>
<span class="t g" style="top:672.04px;font-size:12.60px;left:509.78px;color:#0c0c0c;">885</span>
<span class="t g" style="top:672.04px;font-size:12.60px;left:640.18px;color:#0c0c0c;">10</span>
<span class="t g" style="top:672.04px;font-size:12.60px;left:695.18px;color:#0c0c0c;">300</span>
<span class="t " style="top:690.32px;font-size:12.60px;left:13.45px;transform:translateX(-50%);color:#3a3a3a;">26</span>
<span class="t g" style="top:690.82px;font-size:12.60px;left:29.40px;color:#0c0c0c;">Midmarket</span>
<span class="t g" style="top:690.82px;font-size:12.60px;left:133.90px;color:#0c0c0c;">Mexico</span>
<span class="t g" style="top:690.82px;font-size:12.60px;left:285.50px;color:#0c0c0c;">Paseo</span>
<span class="t g" style="top:690.82px;font-size:12.60px;left:383.50px;color:#0c0c0c;">None</span>
<span class="t g" style="top:690.82px;font-size:12.60px;left:502.77px;color:#0c0c0c;">2472</span>
<span class="t g" style="top:690.82px;font-size:12.60px;left:640.18px;color:#0c0c0c;">50</span>
<span class="t g" style="top:690.82px;font-size:12.60px;left:702.18px;color:#0c0c0c;">15</span>
<span class="t " style="top:709.09px;font-size:12.60px;left:13.45px;transform:translateX(-50%);color:#3a3a3a;">27</span>
<span class="t g" style="top:709.59px;font-size:12.60px;left:29.40px;color:#0c0c0c;">Government</span>
<span class="t g" style="top:709.59px;font-size:12.60px;left:133.90px;color:#0c0c0c;">United States of America</span>
<span class="t g" style="top:709.59px;font-size:12.60px;left:285.50px;color:#0c0c0c;">Paseo</span>
<span class="t g" style="top:709.59px;font-size:12.60px;left:383.50px;color:#0c0c0c;">None</span>
<span class="t g" style="top:709.59px;font-size:12.60px;left:503.70px;color:#0c0c0c;">1143</span>
<span class="t g" style="top:709.59px;font-size:12.60px;left:640.18px;color:#0c0c0c;">10</span>
<span class="t g" style="top:709.59px;font-size:12.60px;left:709.19px;color:#0c0c0c;">7</span>
<span class="t " style="top:727.87px;font-size:12.60px;left:13.45px;transform:translateX(-50%);color:#3a3a3a;">28</span>
<span class="t g" style="top:728.37px;font-size:12.60px;left:29.40px;color:#0c0c0c;">Government</span>
<span class="t g" style="top:728.37px;font-size:12.60px;left:133.90px;color:#0c0c0c;">Canada</span>
<span class="t g" style="top:728.37px;font-size:12.60px;left:285.50px;color:#0c0c0c;">Paseo</span>
<span class="t g" style="top:728.37px;font-size:12.60px;left:383.50px;color:#0c0c0c;">None</span>
<span class="t g" style="top:728.37px;font-size:12.60px;left:502.77px;color:#0c0c0c;">1725</span>
<span class="t g" style="top:728.37px;font-size:12.60px;left:640.18px;color:#0c0c0c;">10</span>
<span class="t g" style="top:728.37px;font-size:12.60px;left:695.18px;color:#0c0c0c;">350</span>
<span class="t " style="top:746.64px;font-size:12.60px;left:13.45px;transform:translateX(-50%);color:#3a3a3a;">29</span>
<span class="t g" style="top:747.14px;font-size:12.60px;left:29.40px;color:#0c0c0c;">Channel Partners</span>
<span class="t g" style="top:747.14px;font-size:12.60px;left:133.90px;color:#0c0c0c;">United States of America</span>
<span class="t g" style="top:747.14px;font-size:12.60px;left:285.50px;color:#0c0c0c;">Paseo</span>
<span class="t g" style="top:747.14px;font-size:12.60px;left:383.50px;color:#0c0c0c;">None</span>
<span class="t g" style="top:747.14px;font-size:12.60px;left:509.78px;color:#0c0c0c;">912</span>
<span class="t g" style="top:747.14px;font-size:12.60px;left:640.18px;color:#0c0c0c;">10</span>
<span class="t g" style="top:747.14px;font-size:12.60px;left:702.18px;color:#0c0c0c;">12</span>
<div class="b" style="left:719.60px;top:216.55px;width:7.90px;height:18.77px;overflow:hidden">
<span class="t g" style="top:4.89px;font-size:12.60px;left:2.60px;font-weight:700;color:#000;">Gross Sales</span>
</div>
<div class="b " style="left:729.00px;top:200.00px;width:2.40px;height:561.02px;background:#ededed;"></div>
<div class="b " style="left:731.20px;top:200.00px;width:14.00px;height:561.02px;background:#dddcdc;"></div>
<div class="b " style="left:732.00px;top:200.00px;width:12.40px;height:14.50px;background:#fbfbfb;border:1px solid #d0d0d0;box-sizing:border-box;"></div>
<svg class="b" style="left:735.20px;top:205.20px;" width="6" height="4" viewBox="0 0 6 4"><path d="M0 3.6h6L3 0z" fill="#666"/></svg>
<div class="b " style="left:732.00px;top:215.80px;width:12.40px;height:20.00px;background:#fcfcfc;border:1px solid #cfcfcf;box-sizing:border-box;"></div>
<div class="b " style="left:732.00px;top:746.02px;width:12.40px;height:14.50px;background:#fbfbfb;border:1px solid #d0d0d0;box-sizing:border-box;"></div>
<svg class="b" style="left:735.20px;top:751.42px;" width="6" height="4" viewBox="0 0 6 4"><path d="M0 0h6L3 3.6z" fill="#666"/></svg>
<div class="b " style="left:0.00px;top:761.02px;width:748.00px;height:21.98px;background:#e6e6e6;"></div>
<svg class="b" style="left:21.50px;top:768.50px;" width="5" height="7" viewBox="0 0 5 7"><path d="M5 0v7L0 3.5z" fill="#c4c4c4"/></svg>
<svg class="b" style="left:44.00px;top:768.50px;" width="5" height="7" viewBox="0 0 5 7"><path d="M0 0v7l5-3.5z" fill="#c4c4c4"/></svg>
<div class="b " style="left:80.50px;top:761.02px;width:62.50px;height:19.50px;background:#fff;"></div>
<div class="b " style="left:80.50px;top:779.32px;width:62.50px;height:2.00px;background:#217346;"></div>
<span class="t " style="top:763.80px;font-size:12.60px;left:90.00px;letter-spacing:0.113px;font-weight:700;color:#217346;">Sheet1</span>
<span class="t " style="top:763.60px;font-size:12.60px;left:152.50px;letter-spacing:-0.073px;color:#444;">Sheet2</span>
<div class="b " style="left:203.00px;top:764.00px;width:1.00px;height:15.00px;background:#bdbdbd;"></div>
<svg class="b" style="left:229.50px;top:764.30px;" width="15.6" height="15.6" viewBox="0 0 15.6 15.6"><circle cx="7.8" cy="7.8" r="7" fill="none" stroke="#666" stroke-width="1.1"/><path d="M7.8 4v7.6M4 7.8h7.6" stroke="#666" stroke-width="1.1"/></svg>
<div class="b " style="left:447.50px;top:766.50px;width:1.60px;height:1.60px;background:#9a9a9a;border-radius:50%;"></div>
<div class="b " style="left:447.50px;top:771.00px;width:1.60px;height:1.60px;background:#9a9a9a;border-radius:50%;"></div>
<div class="b " style="left:447.50px;top:775.50px;width:1.60px;height:1.60px;background:#9a9a9a;border-radius:50%;"></div>
<div class="b " style="left:462.00px;top:764.50px;width:266.80px;height:13.50px;background:#dcdcdc;"></div>
<div class="b " style="left:462.00px;top:764.50px;width:13.50px;height:13.50px;background:#fbfbfb;border:1px solid #d0d0d0;box-sizing:border-box;"></div>
<svg class="b" style="left:466.50px;top:768.20px;" width="4" height="6" viewBox="0 0 4 6"><path d="M4 0v6L0 3z" fill="#555"/></svg>
<div class="b " style="left:476.30px;top:764.50px;width:224.50px;height:13.50px;background:#fcfcfc;border:1px solid #cfcfcf;box-sizing:border-box;"></div>
<div class="b " style="left:716.50px;top:764.50px;width:12.30px;height:13.50px;background:#fbfbfb;border:1px solid #d0d0d0;box-sizing:border-box;"></div>
<svg class="b" style="left:721.00px;top:768.20px;" width="4" height="6" viewBox="0 0 4 6"><path d="M0 0v6l4-3z" fill="#555"/></svg>
<div class="b " style="left:0.00px;top:783.00px;width:748.00px;height:22.00px;background:#f3f3f3;"></div>
<div class="b " style="left:0.00px;top:783.00px;width:748.00px;height:1.00px;background:#dedede;"></div>
<span class="t " style="top:789.86px;font-size:10.30px;left:6.00px;letter-spacing:-0.455px;color:#444;">Ready</span>
<svg class="b" style="left:51.00px;top:788.30px;" width="12.5" height="11.5" viewBox="0 0 12.5 11.5"><circle cx="2.6" cy="2.6" r="2.2" fill="#555"/><path d="M6 .8h6v3.4H6z" fill="#555"/><path d="M.6 5.6h11.4v5.4H.6z M.6 8.3h11.4 M4.4 5.6v5.4 M8.2 5.6v5.4" fill="none" stroke="#555" stroke-width="1"/></svg>
<div class="b " style="left:476.00px;top:783.50px;width:32.00px;height:21.50px;background:#cfcfcf;"></div>
<svg class="b" style="left:485.50px;top:787.50px;" width="13" height="12.5" viewBox="0 0 13 12.5"><path d="M.5 .5h12v11.5H.5z M4.5 .5v11.5 M8.5 .5v11.5 M.5 4.3h12 M.5 8.2h12" fill="none" stroke="#555" stroke-width="1"/></svg>
<svg class="b" style="left:517.50px;top:787.50px;" width="13" height="12.5" viewBox="0 0 13 12.5"><path d="M.5 .5h12v11.5H.5z M3.5 3.3h6v6.4h-6z M5 5.5h3 M5 7.5h3" fill="none" stroke="#666" stroke-width="1"/></svg>
<svg class="b" style="left:550.50px;top:787.50px;" width="13" height="12.5" viewBox="0 0 13 12.5"><path d="M.5 .5h12v11.5H.5z M4.5 .5v6.5h4.2V.5" fill="none" stroke="#666" stroke-width="1"/></svg>
<div class="b " style="left:578.50px;top:793.60px;width:6.50px;height:1.40px;background:#555;"></div>
<div class="b " style="left:590.00px;top:794.00px;width:96.00px;height:1.00px;background:#9a9a9a;"></div>
<div class="b " style="left:635.30px;top:787.50px;width:3.80px;height:13.50px;background:#595959;"></div>
<div class="b " style="left:689.30px;top:793.60px;width:7.60px;height:1.30px;background:#444;"></div>
<div class="b " style="left:692.40px;top:790.40px;width:1.30px;height:7.60px;background:#444;"></div>
<span class="t " style="top:790.20px;font-size:10.00px;left:706.00px;letter-spacing:-0.144px;color:#555;">100%</span>
</div>
<div class="b " style="left:745.00px;top:33.00px;width:3.50px;height:772.00px;background:linear-gradient(90deg,rgba(150,175,162,0.2),rgba(150,175,162,0.9));"></div>
<div class="b " style="left:748.40px;top:33.00px;width:1.40px;height:772.00px;background:#3c5047;"></div>
<div class="b " style="left:748.20px;top:0.00px;width:1.80px;height:33.00px;background:#1b6a42;"></div>
<div class="win" style="left:750px;width:750px">
<div class="b " style="left:0.00px;top:0.00px;width:750.00px;height:33.00px;background:#1e7a4c;"></div>
<span class="t " style="top:11.30px;font-size:11.30px;left:22.50px;letter-spacing:-0.094px;color:rgba(255,255,255,0.92);-webkit-text-stroke:0.3px rgba(255,255,255,0.92);">AutoSave</span>
<div class="b " style="left:76.30px;top:7.80px;width:37.20px;height:16.20px;border:1.600px solid rgba(255,255,255,0.92);border-radius:9px;box-sizing:border-box;"></div>
<div class="b " style="left:79.80px;top:12.90px;width:6.00px;height:6.00px;background:rgba(255,255,255,0.92);border-radius:50%;"></div>
<span class="t " style="top:11.47px;font-size:10.50px;left:94.50px;letter-spacing:-0.104px;color:rgba(255,255,255,0.92);-webkit-text-stroke:0.3px rgba(255,255,255,0.92);">Off</span>
<svg class="b" style="left:128.00px;top:9.50px;" width="16" height="16" viewBox="0 0 16 16"><path d="M1 1h11.5l2.5 2.5V15H1z M4 1v4.5h7V1 M4 15V9.5h8V15 M6 12h2v3" fill="none" stroke="rgba(255,255,255,0.92)" stroke-width="1.3"/></svg>
<svg class="b" style="left:158.00px;top:9.00px;" width="16" height="16" viewBox="0 0 16 16"><path d="M2 2v6h6 M2.5 7.5C5 3.5 11 3.5 13 8c1 3-1 5.5-4 6.5" fill="none" stroke="rgba(255,255,255,0.35)" stroke-width="1.4"/></svg>
<svg class="b" style="left:177.00px;top:14.50px;" width="6" height="4" viewBox="0 0 6 4"><path d="M0 0h5l-2.5 3z" fill="rgba(255,255,255,0.35)"/></svg>
<svg class="b" style="left:193.00px;top:9.00px;" width="16" height="16" viewBox="0 0 16 16"><path d="M14 2v6H8 M13.5 7.5C11 3.5 5 3.5 3 8c-1 3 1 5.5 4 6.5" fill="none" stroke="rgba(255,255,255,0.35)" stroke-width="1.4"/></svg>
<svg class="b" style="left:212.00px;top:14.50px;" width="6" height="4" viewBox="0 0 6 4"><path d="M0 0h5l-2.5 3z" fill="rgba(255,255,255,0.35)"/></svg>
<svg class="b" style="left:224.00px;top:9.00px;" width="14" height="18" viewBox="0 0 14 18"><path d="M5 9V3.2a1.6 1.6 0 0 1 3.2 0V8 M8.2 8.5a1.5 1.5 0 0 1 3 0V10a1.4 1.4 0 0 1 2.6 0v3c0 3-1.6 4.5-4.4 4.5S5 15.5 3.6 13.2L1.5 10c1-1.2 2.6-.6 3.5 1 M2.6 4.5a4 4 0 0 1 8 0" fill="none" stroke="rgba(255,255,255,0.92)" stroke-width="1.2"/></svg>
<svg class="b" style="left:245.00px;top:14.50px;" width="6" height="4" viewBox="0 0 6 4"><path d="M0 0h5.4l-2.7 3.2z" fill="rgba(255,255,255,0.92)"/></svg>
<svg class="b" style="left:257.50px;top:9.50px;" width="15.5" height="15.5" viewBox="0 0 15.5 15.5"><path d="M0 0h15.5v15.5H0z" fill="rgba(255,255,255,0.92)" opacity=".8"/><path d="M8.300 8.300h2.800v2.800H8.300z M11.900 8.300h2.800v2.800h-2.800z M8.300 11.900h2.800v2.800H8.300z M11.900 11.900h2.800v2.800h-2.800z" fill="#1e7a4c"/><path d="M1 2.600h4 M3 .8v3.600 M7.600 0v7.600H0" fill="none" stroke="#1e7a4c" stroke-width=".9"/></svg>
<svg class="b" style="left:278.00px;top:14.50px;" width="6" height="4" viewBox="0 0 6 4"><path d="M0 0h5.4l-2.7 3.2z" fill="rgba(255,255,255,0.92)"/></svg>
<svg class="b" style="left:293.00px;top:9.00px;" width="16" height="16" viewBox="0 0 16 16"><path d="M1 3.5h14v12H1z M1 7.5h14 M1 11.5h14 M5.7 3.5v12 M10.4 3.5v12 M3 .8h10" fill="none" stroke="rgba(255,255,255,0.92)" stroke-width="1.3"/></svg>
<svg class="b" style="left:321.00px;top:9.50px;" width="16" height="15" viewBox="0 0 16 15"><path d="M.7 .7h14.6v13.6H.7z M.7 4h14.6 M3.5 7h4v4.5h-4z M9.5 7.5h3.5 M9.5 10.5h3.5" fill="none" stroke="rgba(255,255,255,0.92)" stroke-width="1.3"/></svg>
<svg class="b" style="left:353.50px;top:14.00px;" width="7" height="5" viewBox="0 0 7 5"><path d="M0 0l2 2.2L0 4.4 M3.2 0l2 2.2-2 2.2" fill="none" stroke="rgba(255,255,255,0.92)" stroke-width="1.2"/></svg>
<span class="t " style="top:11.30px;font-size:11.30px;left:381.00px;letter-spacing:-0.148px;color:rgba(255,255,255,0.92);-webkit-text-stroke:0.3px rgba(255,255,255,0.92);">Finan...</span>
<span class="t " style="top:11.30px;font-size:11.30px;left:442.50px;letter-spacing:-0.170px;color:rgba(255,255,255,0.92);-webkit-text-stroke:0.3px rgba(255,255,255,0.92);">Ryan Dube</span>
<div class="b " style="left:508.00px;top:4.50px;width:24.00px;height:24.00px;background:#d8d8d8;border-radius:50%;"></div>
<span class="t " style="top:13.12px;font-size:8.00px;left:520.00px;transform:translateX(-50%);color:#8a8a8a;">RD</span>
<svg class="b" style="left:550.50px;top:8.00px;" width="16" height="17" viewBox="0 0 16 17"><path d="M3 15.5l1-4.5L12 2.5l2.5 2.5L6.5 13.5z M10 4.5l2.5 2.5 M1.5 16l3-1 M12.5 1l.8 1.2 M14.5 .5l-.3 1.4" fill="none" stroke="rgba(255,255,255,0.92)" stroke-width="1.3"/></svg>
<svg class="b" style="left:585.50px;top:11.00px;" width="14" height="11" viewBox="0 0 14 11"><path d="M.7 .7h12.6v9.6H.7z M.7 3.4h12.6" fill="none" stroke="rgba(255,255,255,0.92)" stroke-width="1.3"/><path d="M7 4.6l2.6 3.2H4.4z" fill="rgba(255,255,255,0.92)"/></svg>
<div class="b " style="left:632.50px;top:16.50px;width:10.00px;height:1.20px;background:rgba(255,255,255,0.92);"></div>
<div class="b " style="left:677.50px;top:11.50px;width:10.00px;height:10.00px;border:1.2px solid rgba(255,255,255,0.92);box-sizing:border-box;"></div>
<svg class="b" style="left:722.00px;top:11.00px;" width="11" height="11" viewBox="0 0 11 11"><path d="M0 0l11 11M11 0L0 11" stroke="rgba(255,255,255,0.92)" stroke-width="1.2"/></svg>
<div class="b " style="left:0.00px;top:33.00px;width:750.00px;height:29.00px;background:#f3f3f3;"></div>
<div class="b " style="left:0.00px;top:33.00px;width:750.00px;height:1.60px;background:#d9ece2;"></div>
<span class="t ui" style="top:42.23px;font-size:13.20px;left:16.50px;letter-spacing:-0.568px;">File</span>
<span class="t ui" style="top:42.23px;font-size:13.20px;left:58.00px;letter-spacing:0.134px;">Home</span>
<span class="t ui" style="top:42.23px;font-size:13.20px;left:103.00px;letter-spacing:-0.002px;">Insert</span>
<span class="t ui" style="top:42.23px;font-size:13.20px;left:145.50px;letter-spacing:-0.076px;">Draw</span>
<div class="b" style="left:0;top:0;width:227.00px;height:844px;overflow:hidden">
<span class="t ui" style="top:42.23px;font-size:13.20px;left:184.50px;letter-spacing:-0.382px;word-spacing:1.7px;">Page Layout</span>
</div>
<div class="b" style="left:0;top:0;width:275.00px;height:844px;overflow:hidden">
<span class="t ui" style="top:42.23px;font-size:13.20px;left:234.00px;letter-spacing:0.038px;">Formulas</span>
</div>
<span class="t ui" style="top:42.23px;font-size:13.20px;left:283.00px;letter-spacing:-0.221px;">Data</span>
<span class="t ui" style="top:42.23px;font-size:13.20px;left:319.00px;letter-spacing:-0.547px;">Review</span>
<span class="t ui" style="top:42.23px;font-size:13.20px;left:367.50px;letter-spacing:0.407px;-webkit-text-stroke:0.35px #1c1c1c;">View</span>
<div class="b" style="left:0;top:0;width:447.50px;height:844px;overflow:hidden">
<span class="t ui" style="top:42.23px;font-size:13.20px;left:405.00px;letter-spacing:-0.132px;">Developer</span>
</div>
<div class="b" style="left:0;top:0;width:494.30px;height:844px;overflow:hidden">
<span class="t ui" style="top:42.23px;font-size:13.20px;left:454.00px;letter-spacing:0.307px;">Add-ins</span>
</div>
<span class="t ui" style="top:42.23px;font-size:13.20px;left:502.50px;letter-spacing:-0.162px;">Help</span>
<div class="b" style="left:0;top:0;width:582.30px;height:844px;overflow:hidden">
<span class="t ui" style="top:42.23px;font-size:13.20px;left:538.50px;letter-spacing:-0.453px;">PDFelement</span>
</div>
<div class="b " style="left:98.00px;top:38.00px;width:1.00px;height:20.00px;background:rgba(0,0,0,0.05);"></div>
<div class="b " style="left:140.00px;top:38.00px;width:1.00px;height:20.00px;background:rgba(0,0,0,0.05);"></div>
<div class="b " style="left:180.00px;top:38.00px;width:1.00px;height:20.00px;background:rgba(0,0,0,0.05);"></div>
<div class="b " style="left:229.00px;top:38.00px;width:1.00px;height:20.00px;background:rgba(0,0,0,0.05);"></div>
<div class="b " style="left:279.00px;top:38.00px;width:1.00px;height:20.00px;background:rgba(0,0,0,0.05);"></div>
<div class="b " style="left:314.00px;top:38.00px;width:1.00px;height:20.00px;background:rgba(0,0,0,0.05);"></div>
<div class="b " style="left:363.00px;top:38.00px;width:1.00px;height:20.00px;background:rgba(0,0,0,0.05);"></div>
<div class="b " style="left:401.00px;top:38.00px;width:1.00px;height:20.00px;background:rgba(0,0,0,0.05);"></div>
<div class="b " style="left:449.00px;top:38.00px;width:1.00px;height:20.00px;background:rgba(0,0,0,0.05);"></div>
<div class="b " style="left:497.00px;top:38.00px;width:1.00px;height:20.00px;background:rgba(0,0,0,0.05);"></div>
<div class="b " style="left:533.00px;top:38.00px;width:1.00px;height:20.00px;background:rgba(0,0,0,0.05);"></div>
<div class="b " style="left:367.50px;top:58.70px;width:30.00px;height:2.80px;background:#217346;"></div>
<svg class="b" style="left:595.00px;top:40.00px;" width="15" height="15" viewBox="0 0 15 15"><circle cx="9" cy="5.6" r="4.3" fill="none" stroke="#444" stroke-width="1.2"/><path d="M6 8.8L1 14" stroke="#444" stroke-width="1.3"/></svg>
<span class="t ui" style="top:41.93px;font-size:13.20px;left:618.50px;letter-spacing:-0.638px;">Search</span>
<div class="b " style="left:682.50px;top:37.50px;width:17.50px;height:20.00px;background:#fbfbfb;border:1px solid #ececec;box-sizing:border-box;"></div>
<svg class="b" style="left:685.25px;top:41.00px;" width="12" height="12" viewBox="0 0 12 12"><path d="M1 6v5.3h10V7.5 M3 7.5C3.5 4.5 6 3.6 8.5 3.6 M6.8 1.2L9.3 3.6 6.8 6" fill="none" stroke="#444" stroke-width="1.1"/></svg>
<div class="b " style="left:716.00px;top:37.50px;width:19.00px;height:20.00px;background:#fbfbfb;border:1px solid #ececec;box-sizing:border-box;"></div>
<svg class="b" style="left:719.50px;top:41.50px;" width="12" height="12" viewBox="0 0 12 12"><path d="M1 1h10v7H5L3 10.3V8H1z" fill="none" stroke="#444" stroke-width="1.1"/></svg>
<div class="b " style="left:0.00px;top:62.00px;width:750.00px;height:93.50px;background:#f3f3f3;"></div>
<div class="b " style="left:8.00px;top:65.30px;width:42.00px;height:71.50px;background:#d0d0d0;"></div>
<svg class="b" style="left:15.30px;top:71.30px;" width="27" height="26" viewBox="0 0 27 26"><rect x="0" y="0" width="27" height="26" fill="#f6f6f6"/><path d="M3 0v26 M0 2.88889h27" stroke="#a8a8a8" stroke-width=".4"/><path d="M6 0v26 M0 5.77778h27" stroke="#a8a8a8" stroke-width=".4"/><path d="M9 0v26 M0 8.66667h27" stroke="#a8a8a8" stroke-width=".4"/><path d="M12 0v26 M0 11.5556h27" stroke="#a8a8a8" stroke-width=".4"/><path d="M15 0v26 M0 14.4444h27" stroke="#a8a8a8" stroke-width=".4"/><path d="M18 0v26 M0 17.3333h27" stroke="#a8a8a8" stroke-width=".4"/><path d="M21 0v26 M0 20.2222h27" stroke="#a8a8a8" stroke-width=".4"/><path d="M24 0v26 M0 23.1111h27" stroke="#a8a8a8" stroke-width=".4"/><path d="M.6 .6h25.8v24.8H.6z M9 0v26 M18 0v26 M0 8.7h27 M0 17.3h27" fill="none" stroke="#3b3b3b" stroke-width="1.3"/></svg>
<span class="t ui" style="top:104.80px;font-size:11.30px;left:10.30px;letter-spacing:0.147px;">Normal</span>
<svg class="b" style="left:67.50px;top:71.30px;" width="27" height="26" viewBox="0 0 27 26"><rect width="27" height="26" fill="#f2f2f2"/><path d="M9 0v13 M0 8h18" stroke="#555" stroke-width="1"/><path d="M0 17h18v9H0z" fill="#dbe8f5"/><path d="M18 0v26 M0 17h27" stroke="#5b9bd5" stroke-width="1.300"/><path d="M.6 .6h25.8v24.8H.6z" fill="none" stroke="#3b3b3b" stroke-width="1.3"/></svg>
<span class="t ui" style="top:104.94px;font-size:11.00px;left:52.50px;letter-spacing:-0.098px;">Page Break</span>
<span class="t ui" style="top:120.74px;font-size:11.00px;left:61.30px;letter-spacing:-0.061px;">Preview</span>
<svg class="b" style="left:116.00px;top:78.00px;" width="13" height="15.5" viewBox="0 0 13 15.5"><path d="M.6 .6h7.6l4.2 4.2v10H.6z M8 .6v4.4h4.4 M3 7.5h7v5.5H3z M3 10.2h7 M6.5 7.5v5.5" fill="none" stroke="#3b3b3b" stroke-width="1.1"/></svg>
<span class="t ui" style="top:81.64px;font-size:11.00px;left:133.00px;letter-spacing:0.021px;">Page Layout</span>
<svg class="b" style="left:115.50px;top:109.00px;" width="15" height="15" viewBox="0 0 15 15"><path d="M3 1.5h11.4v12.6H3z M3 4.6h11.4 M3 7.5h11.4 M.6 .2v14.6 M.6 2.5H3 M.6 13H3" fill="none" stroke="#3b3b3b" stroke-width="1.2"/></svg>
<span class="t ui" style="top:111.64px;font-size:11.00px;left:133.00px;letter-spacing:0.158px;">Custom Views</span>
<span class="t ui" style="top:144.02px;font-size:10.40px;left:71.70px;letter-spacing:-0.148px;color:#333;">Workbook Views</span>
<div class="b " style="left:218.00px;top:65.00px;width:1.00px;height:87.00px;background:#d6d6d6;"></div>
<div class="b " style="left:228.00px;top:66.70px;width:31.00px;height:29.00px;background:#f7f7f7;border:1px solid #dcdcdc;box-sizing:border-box;"></div>
<svg class="b" style="left:236.00px;top:73.00px;" width="16" height="15" viewBox="0 0 16 15"><path d="M1 4.5h4V11H1z M5 2.8a2 2 0 1 0 4 0 2 2 0 1 0-4 0 M9.5 2.8H15 M5 11h4 M9 9h3.4v4H9z M12.6 11H15" fill="none" stroke="#3b3b3b" stroke-width="1.1"/></svg>
<span class="t ui" style="top:102.30px;font-size:11.30px;left:244.00px;transform:translateX(-50%);">Show</span>
<svg class="b" style="left:241.50px;top:121.50px;" width="5.4" height="3.4" viewBox="0 0 5.4 3.4"><path d="M0 0h5.4L2.7 3.2z" fill="#444"/></svg>
<div class="b " style="left:269.50px;top:65.00px;width:1.00px;height:87.00px;background:#d6d6d6;"></div>
<svg class="b" style="left:281.00px;top:68.00px;" width="33" height="33" viewBox="0 0 33 33"><circle cx="14" cy="12.6" r="10" fill="none" stroke="#3b3b3b" stroke-width="1.3"/><path d="M21.5 20.5L31 30" stroke="#3b3b3b" stroke-width="1.4"/></svg>
<span class="t ui" style="top:104.80px;font-size:11.30px;left:281.70px;letter-spacing:0.279px;">Zoom</span>
<svg class="b" style="left:325.80px;top:70.80px;" width="26" height="30" viewBox="0 0 26 30"><path d="M.6 .6h12l7.4 7.4v18.6H.6z M12.6 .6v7.4h7.4" fill="none" stroke="#3b3b3b" stroke-width="1.2"/><rect x="7.600" y="16.600" width="19" height="12.200" fill="#2a7ad1"/><text x="17" y="26" font-size="8.500" font-weight="700" text-anchor="middle" fill="#1a4f88" font-family="Liberation Sans, sans-serif" letter-spacing="-.5">100</text></svg>
<span class="t ui" style="top:104.80px;font-size:11.30px;left:323.00px;letter-spacing:-0.475px;">100%</span>
<svg class="b" style="left:368.00px;top:73.00px;" width="30" height="27" viewBox="0 0 30 27"><rect width="28" height="22" fill="#efefef"/><rect x="9.300" y="5.500" width="18.700" height="16.500" fill="#5b97d4"/><path d="M9.333 0v22" stroke="#555" stroke-width=".9"/><path d="M18.666 0v22" stroke="#555" stroke-width=".9"/><path d="M0 5.5h28" stroke="#555" stroke-width=".9"/><path d="M0 11h28" stroke="#555" stroke-width=".9"/><path d="M0 16.5h28" stroke="#555" stroke-width=".9"/><path d="M.6 .6h26.8v20.800H.6z" fill="none" stroke="#3b3b3b" stroke-width="1.300"/><path d="M9.300 5.500H28" fill="none" stroke="#1e64ad" stroke-width="1.200"/><circle cx="18" cy="14.800" r="5.800" fill="#ead8c8" stroke="#3b3b3b" stroke-width="1.200"/><path d="M22.200 19.200l6.800 7" stroke="#3b3b3b" stroke-width="1.400"/></svg>
<span class="t ui" style="top:104.80px;font-size:11.30px;left:359.70px;letter-spacing:0.407px;">Zoom to</span>
<span class="t ui" style="top:120.60px;font-size:11.30px;left:358.00px;letter-spacing:0.057px;">Selection</span>
<span class="t ui" style="top:144.02px;font-size:10.40px;left:328.80px;letter-spacing:-0.096px;color:#333;">Zoom</span>
<div class="b " style="left:415.00px;top:65.00px;width:1.00px;height:87.00px;background:#d6d6d6;"></div>
<svg class="b" style="left:425.50px;top:71.50px;" width="16.5" height="14" viewBox="0 0 16.5 14"><path d="M2.4 2.8h13.4v10.5H2.4z M2.4 5h13.4" fill="none" stroke="#3b3b3b" stroke-width="1.2"/><path d="M2.4 0v5 M0 2.5h5" stroke="#3b3b3b" stroke-width="1"/></svg>
<span class="t ui" style="top:74.24px;font-size:11.00px;left:445.00px;letter-spacing:0.381px;">New Window</span>
<svg class="b" style="left:426.00px;top:94.00px;" width="16" height="15" viewBox="0 0 16 15"><path d="M.6 .6h14.8v13.8H.6z M.6 7.5h14.8" fill="none" stroke="#3b3b3b" stroke-width="1.2"/><path d="M.6 1.6h14.8 M.6 8.6h14.8" stroke="#3b3b3b" stroke-width="2"/></svg>
<span class="t ui" style="top:96.94px;font-size:11.00px;left:445.00px;letter-spacing:0.335px;">Arrange All</span>
<svg class="b" style="left:426.00px;top:116.50px;" width="16" height="15" viewBox="0 0 16 15"><rect x="0" y="0" width="16" height="15" fill="#f4f4f4"/><rect x="0" y="0" width="16" height="5" fill="#2a7ad1"/><rect x="0" y="0" width="5.3" height="15" fill="#2a7ad1"/><path d="M5.3 0v15 M10.6 0v15 M0 5h16 M0 10h16" stroke="#1d5fa6" stroke-width="1"/><path d="M.5 .5h15v14H.5z" fill="none" stroke="#1d5fa6" stroke-width="1"/><path d="M1.2 3.3l1.4-2.2 1.4 2.2z M1.2 11.7l1.4 2.2 1.4-2.2z" fill="#fff"/></svg>
<span class="t ui" style="top:119.94px;font-size:11.00px;left:445.00px;letter-spacing:-0.307px;">Freeze Panes</span>
<svg class="b" style="left:513.00px;top:123.50px;" width="5.4" height="3.4" viewBox="0 0 5.4 3.4"><path d="M0 0h5.4L2.7 3.2z" fill="#444"/></svg>
<svg class="b" style="left:527.50px;top:72.50px;" width="16" height="14" viewBox="0 0 16 14"><path d="M.6 .6h14.8v12.8H.6z M.6 3.4h14.8 M.6 7h14.8" fill="none" stroke="#3b3b3b" stroke-width="1.2"/></svg>
<svg class="b" style="left:527.50px;top:95.00px;" width="16" height="14" viewBox="0 0 16 14"><path d="M.6 .6h14.8v12.8H.6z M.6 13.4L15.4 .6" fill="none" stroke="#3b3b3b" stroke-width="1.2"/></svg>
<svg class="b" style="left:527.50px;top:118.00px;" width="16" height="14" viewBox="0 0 16 14"><path d="M.6 .6h14.8v12.8H.6z M.6 3.4h14.8" fill="none" stroke="#8c8c8c" stroke-width="1.1"/></svg>
<div class="b " style="left:553.00px;top:69.00px;width:22.00px;height:20.50px;background:#c6c6c6;"></div>
<div class="b " style="left:553.00px;top:91.50px;width:22.00px;height:20.50px;background:#c6c6c6;"></div>
<svg class="b" style="left:557.00px;top:74.00px;" width="15" height="11" viewBox="0 0 15 11"><path d="M.6 .6h4l2 2v7.8H.6z M8.4 .6h4l2 2v7.8H8.4z M4.6 .6v2h2 M12.4 .6v2h2" fill="none" stroke="#3b3b3b" stroke-width="1.2"/></svg>
<svg class="b" style="left:556.00px;top:95.00px;" width="17" height="14" viewBox="0 0 17 14"><path d="M.6 1v10 M3.2 1.6h4l2 2v7H3.2z M7.2 1.6v2h2" fill="none" stroke="#3b3b3b" stroke-width="1.2"/><path d="M13 1v12 M11.2 3l1.8-2.4L14.8 3 M11.2 11l1.8 2.4 1.8-2.4" fill="none" stroke="#2a7ad1" stroke-width="1.2"/></svg>
<svg class="b" style="left:556.50px;top:116.00px;" width="16" height="16" viewBox="0 0 16 16"><path d="M.6 6.6h4l2 2v6.8H.6z M8.4 6.6h4l2 2v6.8H8.4z M4.6 6.6v2h2 M12.4 6.6v2h2" fill="none" stroke="#3b3b3b" stroke-width="1.2"/><path d="M2.5 4.8C3 1.5 7 .8 9 3 M2 1.2l.4 3.8 3.4-.6" fill="none" stroke="#2a7ad1" stroke-width="1.2"/></svg>
<svg class="b" style="left:595.00px;top:70.00px;" width="31" height="29" viewBox="0 0 31 29"><path d="M2.6 .6h19.8v5 M2.6 .6v14 M2.6 3.5h19.8" fill="none" stroke="#3b3b3b" stroke-width="1.2"/><path d="M9.6 8.6h20.8v17.8H9.6z M9.6 12h20.8" fill="#f1f1f1" stroke="#3b3b3b" stroke-width="1.2"/><path d="M3 14.5C1 18 2.5 22 7.5 22.5 M5 19.5l3 3-3.4 2.6" fill="none" stroke="#2a7ad1" stroke-width="1.4"/></svg>
<span class="t ui" style="top:104.80px;font-size:11.30px;left:594.80px;letter-spacing:-0.064px;">Switch</span>
<span class="t ui" style="top:120.60px;font-size:11.30px;left:584.00px;letter-spacing:0.166px;">Windows</span>
<svg class="b" style="left:634.30px;top:124.30px;" width="5.4" height="3.4" viewBox="0 0 5.4 3.4"><path d="M0 0h5.4L2.7 3.2z" fill="#444"/></svg>
<span class="t ui" style="top:144.02px;font-size:10.40px;left:513.00px;letter-spacing:0.002px;color:#333;">Window</span>
<div class="b " style="left:648.50px;top:65.00px;width:1.00px;height:87.00px;background:#d6d6d6;"></div>
<svg class="b" style="left:663.50px;top:71.00px;" width="30" height="29" viewBox="0 0 30 29"><path d="M.6 .6h25.8v22.8H.6z M.6 4.4h25.8" fill="none" stroke="#3b3b3b" stroke-width="1.2"/><path d="M4 8.5h3 M4 12.5h3 M4 16.5h3 M4 20h3" stroke="#3b3b3b" stroke-width="1.3"/><path d="M9.5 8.5h13 M9.5 12.5h7 M9.5 16.5h6 M9.5 20h6" stroke="#8a8a8a" stroke-width="1"/><path d="M17 13.5h10.5c2 0 2 3.6 0 3.6h-1v8.5c0 2.2-9.5 2.2-9.5 0z M26 13.6c-1.6 0-1.6 3.4 0 3.5" fill="#f3f3f3" stroke="#d2553a" stroke-width="1.2"/></svg>
<span class="t ui" style="top:104.80px;font-size:11.30px;left:659.00px;letter-spacing:-0.008px;">Macros</span>
<svg class="b" style="left:675.30px;top:124.30px;" width="5.4" height="3.4" viewBox="0 0 5.4 3.4"><path d="M0 0h5.4L2.7 3.2z" fill="#444"/></svg>
<span class="t ui" style="top:144.02px;font-size:10.40px;left:660.50px;letter-spacing:0.001px;color:#333;">Macros</span>
<div class="b " style="left:706.00px;top:65.00px;width:1.00px;height:87.00px;background:#d6d6d6;"></div>
<svg class="b" style="left:730.50px;top:144.50px;" width="10" height="6" viewBox="0 0 10 6"><path d="M.7 5.3L5 1l4.3 4.3" fill="none" stroke="#444" stroke-width="1.4"/></svg>
<div class="b " style="left:0.00px;top:155.50px;width:750.00px;height:45.00px;background:#e1e1e1;"></div>
<div class="b " style="left:0.00px;top:155.50px;width:750.00px;height:10.50px;background:#dadada;"></div>
<div class="b " style="left:5.50px;top:166.00px;width:98.00px;height:22.60px;background:#f2f2f2;border:1px solid #e0e0e0;box-sizing:border-box;"></div>
<span class="t g" style="top:172.16px;font-size:11.60px;left:11.00px;letter-spacing:-0.845px;color:#222;">B9</span>
<svg class="b" style="left:91.00px;top:175.50px;" width="6" height="4" viewBox="0 0 6 4"><path d="M0 0h6L3 3.4z" fill="#555"/></svg>
<div class="b " style="left:117.00px;top:171.20px;width:2.20px;height:2.20px;background:#9a9a9a;border-radius:50%;"></div>
<div class="b " style="left:117.00px;top:176.20px;width:2.20px;height:2.20px;background:#9a9a9a;border-radius:50%;"></div>
<div class="b " style="left:117.00px;top:181.20px;width:2.20px;height:2.20px;background:#9a9a9a;border-radius:50%;"></div>
<div class="b " style="left:133.00px;top:166.00px;width:106.00px;height:22.60px;background:#f2f2f2;border:1px solid #e0e0e0;box-sizing:border-box;"></div>
<svg class="b" style="left:145.50px;top:172.50px;" width="9" height="9" viewBox="0 0 9 9"><path d="M0 0l9 9M9 0L0 9" stroke="#a6a6a6" stroke-width="1.2"/></svg>
<svg class="b" style="left:180.50px;top:172.50px;" width="11" height="9" viewBox="0 0 11 9"><path d="M.5 5l3.2 3.4L10.5 .5" fill="none" stroke="#a6a6a6" stroke-width="1.3"/></svg>
<span class="t g" style="top:170.79px;font-size:13.50px;left:215.00px;color:#444;font-family:'Liberation Serif',serif;font-style:italic;">f</span>
<span class="t g" style="top:173.67px;font-size:10.50px;left:220.50px;color:#444;font-family:'Liberation Serif',serif;font-style:italic;">x</span>
<div class="b " style="left:243.00px;top:166.00px;width:503.00px;height:22.60px;background:#f2f2f2;border:1px solid #e0e0e0;box-sizing:border-box;"></div>
<span class="t g" style="top:172.37px;font-size:11.80px;left:253.50px;letter-spacing:0.027px;color:#222;">Canada</span>
<svg class="b" style="left:733.50px;top:175.00px;" width="8" height="5" viewBox="0 0 8 5"><path d="M.6 .6L4 4l3.4-3.4" fill="none" stroke="#444" stroke-width="1.3"/></svg>
<div class="b " style="left:26.50px;top:216.55px;width:704.20px;height:544.47px;background:#fff;"></div>
<div class="b " style="left:0.00px;top:200.00px;width:730.70px;height:16.55px;background:#e2e2e2;"></div>
<div class="b " style="left:0.00px;top:216.55px;width:26.50px;height:544.47px;background:#e2e2e2;"></div>
<svg class="b" style="left:10.80px;top:201.00px;" width="12.5" height="13" viewBox="0 0 12.5 13"><path d="M12.5 0v13H0z" fill="#b4b4b4"/></svg>
<div class="b " style="left:131.00px;top:200.00px;width:151.60px;height:16.55px;background:#d2d2d2;"></div>
<div class="b " style="left:131.00px;top:214.95px;width:152.60px;height:2.00px;background:#217346;"></div>
<div class="b " style="left:0.00px;top:366.75px;width:26.50px;height:18.77px;background:#d2d2d2;"></div>
<div class="b " style="left:25.10px;top:366.75px;width:2.00px;height:19.77px;background:#217346;"></div>
<div class="b " style="left:0.00px;top:216.50px;width:730.70px;height:1.00px;background:#b9b9b9;"></div>
<div class="b " style="left:0.00px;top:234.83px;width:26.50px;height:1.00px;background:#c4c4c4;"></div>
<div class="b " style="left:26.50px;top:234.83px;width:704.20px;height:1.00px;background:#eeeeee;"></div>
<div class="b " style="left:0.00px;top:253.60px;width:26.50px;height:1.00px;background:#c4c4c4;"></div>
<div class="b " style="left:26.50px;top:253.60px;width:704.20px;height:1.00px;background:#eeeeee;"></div>
<div class="b " style="left:0.00px;top:272.38px;width:26.50px;height:1.00px;background:#c4c4c4;"></div>
<div class="b " style="left:26.50px;top:272.38px;width:704.20px;height:1.00px;background:#eeeeee;"></div>
<div class="b " style="left:0.00px;top:291.15px;width:26.50px;height:1.00px;background:#c4c4c4;"></div>
<div class="b " style="left:26.50px;top:291.15px;width:704.20px;height:1.00px;background:#eeeeee;"></div>
<div class="b " style="left:0.00px;top:309.93px;width:26.50px;height:1.00px;background:#c4c4c4;"></div>
<div class="b " style="left:26.50px;top:309.93px;width:704.20px;height:1.00px;background:#eeeeee;"></div>
<div class="b " style="left:0.00px;top:328.70px;width:26.50px;height:1.00px;background:#c4c4c4;"></div>
<div class="b " style="left:26.50px;top:328.70px;width:704.20px;height:1.00px;background:#eeeeee;"></div>
<div class="b " style="left:0.00px;top:347.48px;width:26.50px;height:1.00px;background:#c4c4c4;"></div>
<div class="b " style="left:26.50px;top:347.48px;width:704.20px;height:1.00px;background:#eeeeee;"></div>
<div class="b " style="left:0.00px;top:366.25px;width:26.50px;height:1.00px;background:#c4c4c4;"></div>
<div class="b " style="left:26.50px;top:366.25px;width:704.20px;height:1.00px;background:#eeeeee;"></div>
<div class="b " style="left:0.00px;top:385.02px;width:26.50px;height:1.00px;background:#c4c4c4;"></div>
<div class="b " style="left:26.50px;top:385.02px;width:704.20px;height:1.00px;background:#eeeeee;"></div>
<div class="b " style="left:0.00px;top:403.80px;width:26.50px;height:1.00px;background:#c4c4c4;"></div>
<div class="b " style="left:26.50px;top:403.80px;width:704.20px;height:1.00px;background:#eeeeee;"></div>
<div class="b " style="left:0.00px;top:422.57px;width:26.50px;height:1.00px;background:#c4c4c4;"></div>
<div class="b " style="left:26.50px;top:422.57px;width:704.20px;height:1.00px;background:#eeeeee;"></div>
<div class="b " style="left:0.00px;top:441.35px;width:26.50px;height:1.00px;background:#c4c4c4;"></div>
<div class="b " style="left:26.50px;top:441.35px;width:704.20px;height:1.00px;background:#eeeeee;"></div>
<div class="b " style="left:0.00px;top:460.12px;width:26.50px;height:1.00px;background:#c4c4c4;"></div>
<div class="b " style="left:26.50px;top:460.12px;width:704.20px;height:1.00px;background:#eeeeee;"></div>
<div class="b " style="left:0.00px;top:478.90px;width:26.50px;height:1.00px;background:#c4c4c4;"></div>
<div class="b " style="left:26.50px;top:478.90px;width:704.20px;height:1.00px;background:#eeeeee;"></div>
<div class="b " style="left:0.00px;top:497.68px;width:26.50px;height:1.00px;background:#c4c4c4;"></div>
<div class="b " style="left:26.50px;top:497.68px;width:704.20px;height:1.00px;background:#eeeeee;"></div>
<div class="b " style="left:0.00px;top:516.45px;width:26.50px;height:1.00px;background:#c4c4c4;"></div>
<div class="b " style="left:26.50px;top:516.45px;width:704.20px;height:1.00px;background:#eeeeee;"></div>
<div class="b " style="left:0.00px;top:535.22px;width:26.50px;height:1.00px;background:#c4c4c4;"></div>
<div class="b " style="left:26.50px;top:535.22px;width:704.20px;height:1.00px;background:#eeeeee;"></div>
<div class="b " style="left:0.00px;top:554.00px;width:26.50px;height:1.00px;background:#c4c4c4;"></div>
<div class="b " style="left:26.50px;top:554.00px;width:704.20px;height:1.00px;background:#eeeeee;"></div>
<div class="b " style="left:0.00px;top:572.77px;width:26.50px;height:1.00px;background:#c4c4c4;"></div>
<div class="b " style="left:26.50px;top:572.77px;width:704.20px;height:1.00px;background:#eeeeee;"></div>
<div class="b " style="left:0.00px;top:591.55px;width:26.50px;height:1.00px;background:#c4c4c4;"></div>
<div class="b " style="left:26.50px;top:591.55px;width:704.20px;height:1.00px;background:#eeeeee;"></div>
<div class="b " style="left:0.00px;top:610.33px;width:26.50px;height:1.00px;background:#c4c4c4;"></div>
<div class="b " style="left:26.50px;top:610.33px;width:704.20px;height:1.00px;background:#eeeeee;"></div>
<div class="b " style="left:0.00px;top:629.10px;width:26.50px;height:1.00px;background:#c4c4c4;"></div>
<div class="b " style="left:26.50px;top:629.10px;width:704.20px;height:1.00px;background:#eeeeee;"></div>
<div class="b " style="left:0.00px;top:647.88px;width:26.50px;height:1.00px;background:#c4c4c4;"></div>
<div class="b " style="left:26.50px;top:647.88px;width:704.20px;height:1.00px;background:#eeeeee;"></div>
<div class="b " style="left:0.00px;top:666.65px;width:26.50px;height:1.00px;background:#c4c4c4;"></div>
<div class="b " style="left:26.50px;top:666.65px;width:704.20px;height:1.00px;background:#eeeeee;"></div>
<div class="b " style="left:0.00px;top:685.42px;width:26.50px;height:1.00px;background:#c4c4c4;"></div>
<div class="b " style="left:26.50px;top:685.42px;width:704.20px;height:1.00px;background:#eeeeee;"></div>
<div class="b " style="left:0.00px;top:704.20px;width:26.50px;height:1.00px;background:#c4c4c4;"></div>
<div class="b " style="left:26.50px;top:704.20px;width:704.20px;height:1.00px;background:#eeeeee;"></div>
<div class="b " style="left:0.00px;top:722.97px;width:26.50px;height:1.00px;background:#c4c4c4;"></div>
<div class="b " style="left:26.50px;top:722.97px;width:704.20px;height:1.00px;background:#eeeeee;"></div>
<div class="b " style="left:0.00px;top:741.75px;width:26.50px;height:1.00px;background:#c4c4c4;"></div>
<div class="b " style="left:26.50px;top:741.75px;width:704.20px;height:1.00px;background:#eeeeee;"></div>
<div class="b " style="left:0.00px;top:760.52px;width:26.50px;height:1.00px;background:#c4c4c4;"></div>
<div class="b " style="left:26.50px;top:760.52px;width:704.20px;height:1.00px;background:#eeeeee;"></div>
<div class="b " style="left:26.00px;top:202.00px;width:1.00px;height:14.55px;background:#b9b9b9;"></div>
<div class="b " style="left:26.00px;top:216.55px;width:1.00px;height:544.47px;background:#b9b9b9;"></div>
<div class="b " style="left:130.50px;top:202.00px;width:1.00px;height:14.55px;background:#bdbdbd;"></div>
<div class="b " style="left:130.50px;top:216.55px;width:1.00px;height:544.47px;background:#e6e6e6;"></div>
<div class="b " style="left:282.10px;top:202.00px;width:1.00px;height:14.55px;background:#bdbdbd;"></div>
<div class="b " style="left:282.10px;top:216.55px;width:1.00px;height:544.47px;background:#e6e6e6;"></div>
<div class="b " style="left:380.10px;top:202.00px;width:1.00px;height:14.55px;background:#bdbdbd;"></div>
<div class="b " style="left:380.10px;top:216.55px;width:1.00px;height:544.47px;background:#e6e6e6;"></div>
<div class="b " style="left:469.50px;top:202.00px;width:1.00px;height:14.55px;background:#bdbdbd;"></div>
<div class="b " style="left:469.50px;top:216.55px;width:1.00px;height:544.47px;background:#e6e6e6;"></div>
<div class="b " style="left:533.70px;top:202.00px;width:1.00px;height:14.55px;background:#bdbdbd;"></div>
<div class="b " style="left:533.70px;top:216.55px;width:1.00px;height:544.47px;background:#e6e6e6;"></div>
<div class="b " style="left:657.10px;top:202.00px;width:1.00px;height:14.55px;background:#bdbdbd;"></div>
<div class="b " style="left:657.10px;top:216.55px;width:1.00px;height:544.47px;background:#e6e6e6;"></div>
<div class="b " style="left:719.10px;top:202.00px;width:1.00px;height:14.55px;background:#bdbdbd;"></div>
<div class="b " style="left:719.10px;top:216.55px;width:1.00px;height:544.47px;background:#e6e6e6;"></div>
<div class="b " style="left:730.20px;top:202.00px;width:1.00px;height:14.55px;background:#bdbdbd;"></div>
<div class="b " style="left:730.20px;top:216.55px;width:1.00px;height:544.47px;background:#e6e6e6;"></div>
<div class="b " style="left:0.00px;top:760.52px;width:730.70px;height:1.00px;background:#b0b0b0;"></div>
<span class="t " style="top:202.22px;font-size:13.00px;left:78.75px;transform:translateX(-50%);color:#3a3a3a;">A</span>
<span class="t " style="top:202.22px;font-size:13.00px;left:206.80px;transform:translateX(-50%);color:#217346;">B</span>
<span class="t " style="top:202.22px;font-size:13.00px;left:331.60px;transform:translateX(-50%);color:#3a3a3a;">C</span>
<span class="t " style="top:202.22px;font-size:13.00px;left:425.30px;transform:translateX(-50%);color:#3a3a3a;">D</span>
<span class="t " style="top:202.22px;font-size:13.00px;left:502.10px;transform:translateX(-50%);color:#3a3a3a;">E</span>
<span class="t " style="top:202.22px;font-size:13.00px;left:595.90px;transform:translateX(-50%);color:#3a3a3a;">F</span>
<span class="t " style="top:202.22px;font-size:13.00px;left:688.60px;transform:translateX(-50%);color:#3a3a3a;">G</span>
<span class="t " style="top:220.94px;font-size:12.60px;left:13.45px;transform:translateX(-50%);color:#3a3a3a;">1</span>
<span class="t g" style="top:221.44px;font-size:12.60px;left:29.60px;letter-spacing:-0.259px;font-weight:700;color:#000;">Segment</span>
<span class="t g" style="top:221.44px;font-size:12.60px;left:134.00px;letter-spacing:-0.185px;font-weight:700;color:#000;">Country</span>
<span class="t g" style="top:221.44px;font-size:12.60px;left:285.50px;letter-spacing:-0.157px;font-weight:700;color:#000;">Product</span>
<span class="t g" style="top:221.44px;font-size:12.60px;left:383.90px;letter-spacing:-0.346px;font-weight:700;color:#000;">Discount Band</span>
<span class="t g" style="top:221.44px;font-size:12.60px;left:472.60px;letter-spacing:-0.330px;font-weight:700;color:#000;">Units Sold</span>
<span class="t g" style="top:221.44px;font-size:12.60px;left:537.20px;letter-spacing:-0.107px;font-weight:700;color:#000;">Manufacturing Price</span>
<span class="t g" style="top:221.44px;font-size:12.60px;left:660.10px;letter-spacing:-0.404px;font-weight:700;color:#000;">Sale Price</span>
<span class="t " style="top:239.72px;font-size:12.60px;left:13.45px;transform:translateX(-50%);color:#3a3a3a;">2</span>
<span class="t g" style="top:240.22px;font-size:12.60px;left:29.40px;color:#0c0c0c;">Government</span>
<span class="t g" style="top:240.22px;font-size:12.60px;left:133.90px;color:#0c0c0c;">Canada</span>
<span class="t g" style="top:240.22px;font-size:12.60px;left:285.50px;color:#0c0c0c;">Carretera</span>
<span class="t g" style="top:240.22px;font-size:12.60px;left:383.50px;color:#0c0c0c;">None</span>
<span class="t g" style="top:240.22px;font-size:12.60px;left:492.26px;color:#0c0c0c;">1618.5</span>
<span class="t g" style="top:240.22px;font-size:12.60px;left:647.19px;color:#0c0c0c;">3</span>
<span class="t g" style="top:240.22px;font-size:12.60px;left:702.18px;color:#0c0c0c;">20</span>
<span class="t " style="top:258.49px;font-size:12.60px;left:13.45px;transform:translateX(-50%);color:#3a3a3a;">3</span>
<span class="t g" style="top:258.99px;font-size:12.60px;left:29.40px;color:#0c0c0c;">Government</span>
<span class="t g" style="top:258.99px;font-size:12.60px;left:133.90px;color:#0c0c0c;">Germany</span>
<span class="t g" style="top:258.99px;font-size:12.60px;left:285.50px;color:#0c0c0c;">Carretera</span>
<span class="t g" style="top:258.99px;font-size:12.60px;left:383.50px;color:#0c0c0c;">None</span>
<span class="t g" style="top:258.99px;font-size:12.60px;left:502.77px;color:#0c0c0c;">1321</span>
<span class="t g" style="top:258.99px;font-size:12.60px;left:647.19px;color:#0c0c0c;">3</span>
<span class="t g" style="top:258.99px;font-size:12.60px;left:702.18px;color:#0c0c0c;">20</span>
<span class="t " style="top:277.27px;font-size:12.60px;left:13.45px;transform:translateX(-50%);color:#3a3a3a;">4</span>
<span class="t g" style="top:277.77px;font-size:12.60px;left:29.40px;color:#0c0c0c;">Midmarket</span>
<span class="t g" style="top:277.77px;font-size:12.60px;left:133.90px;color:#0c0c0c;">France</span>
<span class="t g" style="top:277.77px;font-size:12.60px;left:285.50px;color:#0c0c0c;">Carretera</span>
<span class="t g" style="top:277.77px;font-size:12.60px;left:383.50px;color:#0c0c0c;">None</span>
<span class="t g" style="top:277.77px;font-size:12.60px;left:502.77px;color:#0c0c0c;">2178</span>
<span class="t g" style="top:277.77px;font-size:12.60px;left:647.19px;color:#0c0c0c;">3</span>
<span class="t g" style="top:277.77px;font-size:12.60px;left:702.18px;color:#0c0c0c;">15</span>
<span class="t " style="top:296.04px;font-size:12.60px;left:13.45px;transform:translateX(-50%);color:#3a3a3a;">5</span>
<span class="t g" style="top:296.54px;font-size:12.60px;left:29.40px;color:#0c0c0c;">Midmarket</span>
<span class="t g" style="top:296.54px;font-size:12.60px;left:133.90px;color:#0c0c0c;">Germany</span>
<span class="t g" style="top:296.54px;font-size:12.60px;left:285.50px;color:#0c0c0c;">Carretera</span>
<span class="t g" style="top:296.54px;font-size:12.60px;left:383.50px;color:#0c0c0c;">None</span>
<span class="t g" style="top:296.54px;font-size:12.60px;left:509.78px;color:#0c0c0c;">888</span>
<span class="t g" style="top:296.54px;font-size:12.60px;left:647.19px;color:#0c0c0c;">3</span>
<span class="t g" style="top:296.54px;font-size:12.60px;left:702.18px;color:#0c0c0c;">20</span>
<span class="t " style="top:314.82px;font-size:12.60px;left:13.45px;transform:translateX(-50%);color:#3a3a3a;">6</span>
<span class="t g" style="top:315.32px;font-size:12.60px;left:29.40px;color:#0c0c0c;">Midmarket</span>
<span class="t g" style="top:315.32px;font-size:12.60px;left:133.90px;color:#0c0c0c;">Mexico</span>
<span class="t g" style="top:315.32px;font-size:12.60px;left:285.50px;color:#0c0c0c;">Carretera</span>
<span class="t g" style="top:315.32px;font-size:12.60px;left:383.50px;color:#0c0c0c;">None</span>
<span class="t g" style="top:315.32px;font-size:12.60px;left:502.77px;color:#0c0c0c;">2470</span>
<span class="t g" style="top:315.32px;font-size:12.60px;left:647.19px;color:#0c0c0c;">3</span>
<span class="t g" style="top:315.32px;font-size:12.60px;left:702.18px;color:#0c0c0c;">15</span>
<span class="t " style="top:333.59px;font-size:12.60px;left:13.45px;transform:translateX(-50%);color:#3a3a3a;">7</span>
<span class="t g" style="top:334.09px;font-size:12.60px;left:29.40px;color:#0c0c0c;">Government</span>
<span class="t g" style="top:334.09px;font-size:12.60px;left:133.90px;color:#0c0c0c;">Germany</span>
<span class="t g" style="top:334.09px;font-size:12.60px;left:285.50px;color:#0c0c0c;">Carretera</span>
<span class="t g" style="top:334.09px;font-size:12.60px;left:383.50px;color:#0c0c0c;">None</span>
<span class="t g" style="top:334.09px;font-size:12.60px;left:502.77px;color:#0c0c0c;">1513</span>
<span class="t g" style="top:334.09px;font-size:12.60px;left:647.19px;color:#0c0c0c;">3</span>
<span class="t g" style="top:334.09px;font-size:12.60px;left:695.18px;color:#0c0c0c;">350</span>
<span class="t " style="top:352.37px;font-size:12.60px;left:13.45px;transform:translateX(-50%);color:#3a3a3a;">8</span>
<span class="t g" style="top:352.87px;font-size:12.60px;left:29.40px;color:#0c0c0c;">Midmarket</span>
<span class="t g" style="top:352.87px;font-size:12.60px;left:133.90px;color:#0c0c0c;">Germany</span>
<span class="t g" style="top:352.87px;font-size:12.60px;left:285.50px;color:#0c0c0c;">Montana</span>
<span class="t g" style="top:352.87px;font-size:12.60px;left:383.50px;color:#0c0c0c;">None</span>
<span class="t g" style="top:352.87px;font-size:12.60px;left:509.78px;color:#0c0c0c;">921</span>
<span class="t g" style="top:352.87px;font-size:12.60px;left:647.19px;color:#0c0c0c;">5</span>
<span class="t g" style="top:352.87px;font-size:12.60px;left:702.18px;color:#0c0c0c;">35</span>
<span class="t " style="top:371.14px;font-size:12.60px;left:13.45px;transform:translateX(-50%);color:#217346;">9</span>
<span class="t g" style="top:371.64px;font-size:12.60px;left:29.40px;color:#0c0c0c;">Channel Partners</span>
<span class="t g" style="top:371.64px;font-size:12.60px;left:133.90px;color:#0c0c0c;">Canada</span>
<span class="t g" style="top:371.64px;font-size:12.60px;left:285.50px;color:#0c0c0c;">Montana</span>
<span class="t g" style="top:371.64px;font-size:12.60px;left:383.50px;color:#0c0c0c;">None</span>
<span class="t g" style="top:371.64px;font-size:12.60px;left:502.77px;color:#0c0c0c;">2519</span>
<span class="t g" style="top:371.64px;font-size:12.60px;left:647.19px;color:#0c0c0c;">5</span>
<span class="t g" style="top:371.64px;font-size:12.60px;left:702.18px;color:#0c0c0c;">12</span>
<span class="t " style="top:389.92px;font-size:12.60px;left:13.45px;transform:translateX(-50%);color:#3a3a3a;">10</span>
<span class="t g" style="top:390.42px;font-size:12.60px;left:29.40px;color:#0c0c0c;">Government</span>
<span class="t g" style="top:390.42px;font-size:12.60px;left:133.90px;color:#0c0c0c;">France</span>
<span class="t g" style="top:390.42px;font-size:12.60px;left:285.50px;color:#0c0c0c;">Montana</span>
<span class="t g" style="top:390.42px;font-size:12.60px;left:383.50px;color:#0c0c0c;">None</span>
<span class="t g" style="top:390.42px;font-size:12.60px;left:502.77px;color:#0c0c0c;">1899</span>
<span class="t g" style="top:390.42px;font-size:12.60px;left:647.19px;color:#0c0c0c;">5</span>
<span class="t g" style="top:390.42px;font-size:12.60px;left:702.18px;color:#0c0c0c;">20</span>
<span class="t " style="top:408.69px;font-size:12.60px;left:13.45px;transform:translateX(-50%);color:#3a3a3a;">11</span>
<span class="t g" style="top:409.19px;font-size:12.60px;left:29.40px;color:#0c0c0c;">Channel Partners</span>
<span class="t g" style="top:409.19px;font-size:12.60px;left:133.90px;color:#0c0c0c;">Germany</span>
<span class="t g" style="top:409.19px;font-size:12.60px;left:285.50px;color:#0c0c0c;">Maine</span>
<span class="t g" style="top:409.19px;font-size:12.60px;left:383.50px;color:#0c0c0c;">None</span>
<span class="t g" style="top:409.19px;font-size:12.60px;left:502.77px;color:#0c0c0c;">1545</span>
<span class="t g" style="top:409.19px;font-size:12.60px;left:647.19px;color:#0c0c0c;">5</span>
<span class="t g" style="top:409.19px;font-size:12.60px;left:702.18px;color:#0c0c0c;">12</span>
<span class="t " style="top:427.47px;font-size:12.60px;left:13.45px;transform:translateX(-50%);color:#3a3a3a;">12</span>
<span class="t g" style="top:427.97px;font-size:12.60px;left:29.40px;color:#0c0c0c;">Midmarket</span>
<span class="t g" style="top:427.97px;font-size:12.60px;left:133.90px;color:#0c0c0c;">Mexico</span>
<span class="t g" style="top:427.97px;font-size:12.60px;left:285.50px;color:#0c0c0c;">Montana</span>
<span class="t g" style="top:427.97px;font-size:12.60px;left:383.50px;color:#0c0c0c;">None</span>
<span class="t g" style="top:427.97px;font-size:12.60px;left:502.77px;color:#0c0c0c;">5483</span>
<span class="t g" style="top:427.97px;font-size:12.60px;left:647.19px;color:#0c0c0c;">5</span>
<span class="t g" style="top:427.97px;font-size:12.60px;left:702.18px;color:#0c0c0c;">25</span>
<span class="t " style="top:446.24px;font-size:12.60px;left:13.45px;transform:translateX(-50%);color:#3a3a3a;">13</span>
<span class="t g" style="top:446.74px;font-size:12.60px;left:29.40px;color:#0c0c0c;">Enterprise</span>
<span class="t g" style="top:446.74px;font-size:12.60px;left:133.90px;color:#0c0c0c;">Canada</span>
<span class="t g" style="top:446.74px;font-size:12.60px;left:285.50px;color:#0c0c0c;">Montana</span>
<span class="t g" style="top:446.74px;font-size:12.60px;left:383.50px;color:#0c0c0c;">None</span>
<span class="t g" style="top:446.74px;font-size:12.60px;left:492.26px;color:#0c0c0c;">2665.5</span>
<span class="t g" style="top:446.74px;font-size:12.60px;left:647.19px;color:#0c0c0c;">5</span>
<span class="t g" style="top:446.74px;font-size:12.60px;left:695.18px;color:#0c0c0c;">125</span>
<span class="t " style="top:465.02px;font-size:12.60px;left:13.45px;transform:translateX(-50%);color:#3a3a3a;">14</span>
<span class="t g" style="top:465.52px;font-size:12.60px;left:29.40px;color:#0c0c0c;">Small Business</span>
<span class="t g" style="top:465.52px;font-size:12.60px;left:133.90px;color:#0c0c0c;">Mexico</span>
<span class="t g" style="top:465.52px;font-size:12.60px;left:285.50px;color:#0c0c0c;">Montana</span>
<span class="t g" style="top:465.52px;font-size:12.60px;left:383.50px;color:#0c0c0c;">None</span>
<span class="t g" style="top:465.52px;font-size:12.60px;left:509.78px;color:#0c0c0c;">958</span>
<span class="t g" style="top:465.52px;font-size:12.60px;left:647.19px;color:#0c0c0c;">5</span>
<span class="t g" style="top:465.52px;font-size:12.60px;left:695.18px;color:#0c0c0c;">300</span>
<span class="t " style="top:483.79px;font-size:12.60px;left:13.45px;transform:translateX(-50%);color:#3a3a3a;">15</span>
<span class="t g" style="top:484.29px;font-size:12.60px;left:29.40px;color:#0c0c0c;">Government</span>
<span class="t g" style="top:484.29px;font-size:12.60px;left:133.90px;color:#0c0c0c;">Germany</span>
<span class="t g" style="top:484.29px;font-size:12.60px;left:285.50px;color:#0c0c0c;">New Hampshire</span>
<span class="t g" style="top:484.29px;font-size:12.60px;left:383.50px;color:#0c0c0c;">None</span>
<span class="t g" style="top:484.29px;font-size:12.60px;left:502.77px;color:#0c0c0c;">2146</span>
<span class="t g" style="top:484.29px;font-size:12.60px;left:647.19px;color:#0c0c0c;">5</span>
<span class="t g" style="top:484.29px;font-size:12.60px;left:709.19px;color:#0c0c0c;">7</span>
<span class="t " style="top:502.57px;font-size:12.60px;left:13.45px;transform:translateX(-50%);color:#3a3a3a;">16</span>
<span class="t g" style="top:503.07px;font-size:12.60px;left:29.40px;color:#0c0c0c;">Enterprise</span>
<span class="t g" style="top:503.07px;font-size:12.60px;left:133.90px;color:#0c0c0c;">Canada</span>
<span class="t g" style="top:503.07px;font-size:12.60px;left:285.50px;color:#0c0c0c;">Montana</span>
<span class="t g" style="top:503.07px;font-size:12.60px;left:383.50px;color:#0c0c0c;">None</span>
<span class="t g" style="top:503.07px;font-size:12.60px;left:509.78px;color:#0c0c0c;">345</span>
<span class="t g" style="top:503.07px;font-size:12.60px;left:647.19px;color:#0c0c0c;">5</span>
<span class="t g" style="top:503.07px;font-size:12.60px;left:695.18px;color:#0c0c0c;">125</span>
<span class="t " style="top:521.34px;font-size:12.60px;left:13.45px;transform:translateX(-50%);color:#3a3a3a;">17</span>
<span class="t g" style="top:521.84px;font-size:12.60px;left:29.40px;color:#0c0c0c;">Midmarket</span>
<span class="t g" style="top:521.84px;font-size:12.60px;left:133.90px;color:#0c0c0c;">United States of America</span>
<span class="t g" style="top:521.84px;font-size:12.60px;left:285.50px;color:#0c0c0c;">Montana</span>
<span class="t g" style="top:521.84px;font-size:12.60px;left:383.50px;color:#0c0c0c;">None</span>
<span class="t g" style="top:521.84px;font-size:12.60px;left:509.78px;color:#0c0c0c;">615</span>
<span class="t g" style="top:521.84px;font-size:12.60px;left:647.19px;color:#0c0c0c;">5</span>
<span class="t g" style="top:521.84px;font-size:12.60px;left:702.18px;color:#0c0c0c;">15</span>
<span class="t " style="top:540.12px;font-size:12.60px;left:13.45px;transform:translateX(-50%);color:#3a3a3a;">18</span>
<span class="t g" style="top:540.62px;font-size:12.60px;left:29.40px;color:#0c0c0c;">Government</span>
<span class="t g" style="top:540.62px;font-size:12.60px;left:133.90px;color:#0c0c0c;">Canada</span>
<span class="t g" style="top:540.62px;font-size:12.60px;left:285.50px;color:#0c0c0c;">Paseo</span>
<span class="t g" style="top:540.62px;font-size:12.60px;left:383.50px;color:#0c0c0c;">None</span>
<span class="t g" style="top:540.62px;font-size:12.60px;left:509.78px;color:#0c0c0c;">563</span>
<span class="t g" style="top:540.62px;font-size:12.60px;left:640.18px;color:#0c0c0c;">10</span>
<span class="t g" style="top:540.62px;font-size:12.60px;left:702.18px;color:#0c0c0c;">30</span>
<span class="t " style="top:558.89px;font-size:12.60px;left:13.45px;transform:translateX(-50%);color:#3a3a3a;">19</span>
<span class="t g" style="top:559.39px;font-size:12.60px;left:29.40px;color:#0c0c0c;">Midmarket</span>
<span class="t g" style="top:559.39px;font-size:12.60px;left:133.90px;color:#0c0c0c;">Mexico</span>
<span class="t g" style="top:559.39px;font-size:12.60px;left:285.50px;color:#0c0c0c;">Paseo</span>
<span class="t g" style="top:559.39px;font-size:12.60px;left:383.50px;color:#0c0c0c;">None</span>
<span class="t g" style="top:559.39px;font-size:12.60px;left:509.78px;color:#0c0c0c;">974</span>
<span class="t g" style="top:559.39px;font-size:12.60px;left:640.18px;color:#0c0c0c;">10</span>
<span class="t g" style="top:559.39px;font-size:12.60px;left:702.18px;color:#0c0c0c;">15</span>
<span class="t " style="top:577.67px;font-size:12.60px;left:13.45px;transform:translateX(-50%);color:#3a3a3a;">20</span>
<span class="t g" style="top:578.17px;font-size:12.60px;left:29.40px;color:#0c0c0c;">Channel Partners</span>
<span class="t g" style="top:578.17px;font-size:12.60px;left:133.90px;color:#0c0c0c;">Canada</span>
<span class="t g" style="top:578.17px;font-size:12.60px;left:285.50px;color:#0c0c0c;">Paseo</span>
<span class="t g" style="top:578.17px;font-size:12.60px;left:383.50px;color:#0c0c0c;">None</span>
<span class="t g" style="top:578.17px;font-size:12.60px;left:502.77px;color:#0c0c0c;">2518</span>
<span class="t g" style="top:578.17px;font-size:12.60px;left:640.18px;color:#0c0c0c;">20</span>
<span class="t g" style="top:578.17px;font-size:12.60px;left:702.18px;color:#0c0c0c;">12</span>
<span class="t " style="top:596.44px;font-size:12.60px;left:13.45px;transform:translateX(-50%);color:#3a3a3a;">21</span>
<span class="t g" style="top:596.94px;font-size:12.60px;left:29.40px;color:#0c0c0c;">Government</span>
<span class="t g" style="top:596.94px;font-size:12.60px;left:133.90px;color:#0c0c0c;">Germany</span>
<span class="t g" style="top:596.94px;font-size:12.60px;left:285.50px;color:#0c0c0c;">Paseo</span>
<span class="t g" style="top:596.94px;font-size:12.60px;left:383.50px;color:#0c0c0c;">None</span>
<span class="t g" style="top:596.94px;font-size:12.60px;left:502.77px;color:#0c0c0c;">1006</span>
<span class="t g" style="top:596.94px;font-size:12.60px;left:640.18px;color:#0c0c0c;">10</span>
<span class="t g" style="top:596.94px;font-size:12.60px;left:695.18px;color:#0c0c0c;">350</span>
<span class="t " style="top:615.22px;font-size:12.60px;left:13.45px;transform:translateX(-50%);color:#3a3a3a;">22</span>
<span class="t g" style="top:615.72px;font-size:12.60px;left:29.40px;color:#0c0c0c;">Channel Partners</span>
<span class="t g" style="top:615.72px;font-size:12.60px;left:133.90px;color:#0c0c0c;">Germany</span>
<span class="t g" style="top:615.72px;font-size:12.60px;left:285.50px;color:#0c0c0c;">Paseo</span>
<span class="t g" style="top:615.72px;font-size:12.60px;left:383.50px;color:#0c0c0c;">None</span>
<span class="t g" style="top:615.72px;font-size:12.60px;left:509.78px;color:#0c0c0c;">367</span>
<span class="t g" style="top:615.72px;font-size:12.60px;left:640.18px;color:#0c0c0c;">10</span>
<span class="t g" style="top:615.72px;font-size:12.60px;left:702.18px;color:#0c0c0c;">12</span>
<span class="t " style="top:633.99px;font-size:12.60px;left:13.45px;transform:translateX(-50%);color:#3a3a3a;">23</span>
<span class="t g" style="top:634.49px;font-size:12.60px;left:29.40px;color:#0c0c0c;">Government</span>
<span class="t g" style="top:634.49px;font-size:12.60px;left:133.90px;color:#0c0c0c;">Mexico</span>
<span class="t g" style="top:634.49px;font-size:12.60px;left:285.50px;color:#0c0c0c;">Paseo</span>
<span class="t g" style="top:634.49px;font-size:12.60px;left:383.50px;color:#0c0c0c;">None</span>
<span class="t g" style="top:634.49px;font-size:12.60px;left:509.78px;color:#0c0c0c;">883</span>
<span class="t g" style="top:634.49px;font-size:12.60px;left:640.18px;color:#0c0c0c;">10</span>
<span class="t g" style="top:634.49px;font-size:12.60px;left:709.19px;color:#0c0c0c;">7</span>
<span class="t " style="top:652.77px;font-size:12.60px;left:13.45px;transform:translateX(-50%);color:#3a3a3a;">24</span>
<span class="t g" style="top:653.27px;font-size:12.60px;left:29.40px;color:#0c0c0c;">Midmarket</span>
<span class="t g" style="top:653.27px;font-size:12.60px;left:133.90px;color:#0c0c0c;">France</span>
<span class="t g" style="top:653.27px;font-size:12.60px;left:285.50px;color:#0c0c0c;">Paseo</span>
<span class="t g" style="top:653.27px;font-size:12.60px;left:383.50px;color:#0c0c0c;">None</span>
<span class="t g" style="top:653.27px;font-size:12.60px;left:509.78px;color:#0c0c0c;">549</span>
<span class="t g" style="top:653.27px;font-size:12.60px;left:640.18px;color:#0c0c0c;">10</span>
<span class="t g" style="top:653.27px;font-size:12.60px;left:702.18px;color:#0c0c0c;">15</span>
<span class="t " style="top:671.54px;font-size:12.60px;left:13.45px;transform:translateX(-50%);color:#3a3a3a;">25</span>
<span class="t g" style="top:672.04px;font-size:12.60px;left:29.40px;color:#0c0c0c;">Small Business</span>
<span class="t g" style="top:672.04px;font-size:12.60px;left:133.90px;color:#0c0c0c;">Mexico</span>
<span class="t g" style="top:672.04px;font-size:12.60px;left:285.50px;color:#0c0c0c;">Paseo</span>
<span class="t g" style="top:672.04px;font-size:12.60px;left:383.50px;color:#0c0c0c;">None</span>
<span class="t g" style="top:672.04px;font-size:12.60px;left:509.78px;color:#0c0c0c;">885</span>
<span class="t g" style="top:672.04px;font-size:12.60px;left:640.18px;color:#0c0c0c;">10</span>
<span class="t g" style="top:672.04px;font-size:12.60px;left:695.18px;color:#0c0c0c;">300</span>
<span class="t " style="top:690.32px;font-size:12.60px;left:13.45px;transform:translateX(-50%);color:#3a3a3a;">26</span>
<span class="t g" style="top:690.82px;font-size:12.60px;left:29.40px;color:#0c0c0c;">Midmarket</span>
<span class="t g" style="top:690.82px;font-size:12.60px;left:133.90px;color:#0c0c0c;">Mexico</span>
<span class="t g" style="top:690.82px;font-size:12.60px;left:285.50px;color:#0c0c0c;">Paseo</span>
<span class="t g" style="top:690.82px;font-size:12.60px;left:383.50px;color:#0c0c0c;">None</span>
<span class="t g" style="top:690.82px;font-size:12.60px;left:502.77px;color:#0c0c0c;">2472</span>
<span class="t g" style="top:690.82px;font-size:12.60px;left:640.18px;color:#0c0c0c;">50</span>
<span class="t g" style="top:690.82px;font-size:12.60px;left:702.18px;color:#0c0c0c;">15</span>
<span class="t " style="top:709.09px;font-size:12.60px;left:13.45px;transform:translateX(-50%);color:#3a3a3a;">27</span>
<span class="t g" style="top:709.59px;font-size:12.60px;left:29.40px;color:#0c0c0c;">Government</span>
<span class="t g" style="top:709.59px;font-size:12.60px;left:133.90px;color:#0c0c0c;">United States of America</span>
<span class="t g" style="top:709.59px;font-size:12.60px;left:285.50px;color:#0c0c0c;">Paseo</span>
<span class="t g" style="top:709.59px;font-size:12.60px;left:383.50px;color:#0c0c0c;">None</span>
<span class="t g" style="top:709.59px;font-size:12.60px;left:503.70px;color:#0c0c0c;">1143</span>
<span class="t g" style="top:709.59px;font-size:12.60px;left:640.18px;color:#0c0c0c;">10</span>
<span class="t g" style="top:709.59px;font-size:12.60px;left:709.19px;color:#0c0c0c;">7</span>
<span class="t " style="top:727.87px;font-size:12.60px;left:13.45px;transform:translateX(-50%);color:#3a3a3a;">28</span>
<span class="t g" style="top:728.37px;font-size:12.60px;left:29.40px;color:#0c0c0c;">Government</span>
<span class="t g" style="top:728.37px;font-size:12.60px;left:133.90px;color:#0c0c0c;">Canada</span>
<span class="t g" style="top:728.37px;font-size:12.60px;left:285.50px;color:#0c0c0c;">Paseo</span>
<span class="t g" style="top:728.37px;font-size:12.60px;left:383.50px;color:#0c0c0c;">None</span>
<span class="t g" style="top:728.37px;font-size:12.60px;left:502.77px;color:#0c0c0c;">1725</span>
<span class="t g" style="top:728.37px;font-size:12.60px;left:640.18px;color:#0c0c0c;">10</span>
<span class="t g" style="top:728.37px;font-size:12.60px;left:695.18px;color:#0c0c0c;">350</span>
<span class="t " style="top:746.64px;font-size:12.60px;left:13.45px;transform:translateX(-50%);color:#3a3a3a;">29</span>
<span class="t g" style="top:747.14px;font-size:12.60px;left:29.40px;color:#0c0c0c;">Channel Partners</span>
<span class="t g" style="top:747.14px;font-size:12.60px;left:133.90px;color:#0c0c0c;">United States of America</span>
<span class="t g" style="top:747.14px;font-size:12.60px;left:285.50px;color:#0c0c0c;">Paseo</span>
<span class="t g" style="top:747.14px;font-size:12.60px;left:383.50px;color:#0c0c0c;">None</span>
<span class="t g" style="top:747.14px;font-size:12.60px;left:509.78px;color:#0c0c0c;">912</span>
<span class="t g" style="top:747.14px;font-size:12.60px;left:640.18px;color:#0c0c0c;">10</span>
<span class="t g" style="top:747.14px;font-size:12.60px;left:702.18px;color:#0c0c0c;">12</span>
<div class="b" style="left:719.60px;top:216.55px;width:10.10px;height:18.77px;overflow:hidden">
<span class="t g" style="top:4.89px;font-size:12.60px;left:2.60px;font-weight:700;color:#000;">Gross Sales</span>
</div>
<div class="b " style="left:130.00px;top:365.75px;width:153.60px;height:20.77px;border:2px solid #217346;box-sizing:border-box;"></div>
<div class="b " style="left:280.10px;top:383.02px;width:5.00px;height:5.00px;background:#217346;border:1px solid #fff;box-sizing:border-box;"></div>
<div class="b " style="left:731.20px;top:200.00px;width:2.40px;height:561.02px;background:#ededed;"></div>
<div class="b " style="left:733.40px;top:200.00px;width:14.00px;height:561.02px;background:#dddcdc;"></div>
<div class="b " style="left:734.20px;top:200.00px;width:12.40px;height:14.50px;background:#fbfbfb;border:1px solid #d0d0d0;box-sizing:border-box;"></div>
<svg class="b" style="left:737.40px;top:205.20px;" width="6" height="4" viewBox="0 0 6 4"><path d="M0 3.6h6L3 0z" fill="#666"/></svg>
<div class="b " style="left:734.20px;top:215.80px;width:12.40px;height:20.00px;background:#fcfcfc;border:1px solid #cfcfcf;box-sizing:border-box;"></div>
<div class="b " style="left:734.20px;top:746.02px;width:12.40px;height:14.50px;background:#fbfbfb;border:1px solid #d0d0d0;box-sizing:border-box;"></div>
<svg class="b" style="left:737.40px;top:751.42px;" width="6" height="4" viewBox="0 0 6 4"><path d="M0 0h6L3 3.6z" fill="#666"/></svg>
<div class="b " style="left:0.00px;top:761.02px;width:750.00px;height:21.98px;background:#e6e6e6;"></div>
<svg class="b" style="left:21.50px;top:768.50px;" width="5" height="7" viewBox="0 0 5 7"><path d="M5 0v7L0 3.5z" fill="#c4c4c4"/></svg>
<svg class="b" style="left:44.00px;top:768.50px;" width="5" height="7" viewBox="0 0 5 7"><path d="M0 0v7l5-3.5z" fill="#c4c4c4"/></svg>
<div class="b " style="left:80.50px;top:761.02px;width:62.50px;height:19.50px;background:#fff;"></div>
<div class="b " style="left:80.50px;top:779.32px;width:62.50px;height:2.00px;background:#217346;"></div>
<span class="t " style="top:763.80px;font-size:12.60px;left:90.00px;letter-spacing:0.113px;font-weight:700;color:#217346;">Sheet1</span>
<span class="t " style="top:763.60px;font-size:12.60px;left:152.50px;letter-spacing:-0.073px;color:#444;">Sheet2</span>
<div class="b " style="left:203.00px;top:764.00px;width:1.00px;height:15.00px;background:#bdbdbd;"></div>
<svg class="b" style="left:229.50px;top:764.30px;" width="15.6" height="15.6" viewBox="0 0 15.6 15.6"><circle cx="7.8" cy="7.8" r="7" fill="none" stroke="#666" stroke-width="1.1"/><path d="M7.8 4v7.6M4 7.8h7.6" stroke="#666" stroke-width="1.1"/></svg>
<div class="b " style="left:447.50px;top:766.50px;width:1.60px;height:1.60px;background:#9a9a9a;border-radius:50%;"></div>
<div class="b " style="left:447.50px;top:771.00px;width:1.60px;height:1.60px;background:#9a9a9a;border-radius:50%;"></div>
<div class="b " style="left:447.50px;top:775.50px;width:1.60px;height:1.60px;background:#9a9a9a;border-radius:50%;"></div>
<div class="b " style="left:462.00px;top:764.50px;width:268.20px;height:13.50px;background:#dcdcdc;"></div>
<div class="b " style="left:462.00px;top:764.50px;width:13.50px;height:13.50px;background:#fbfbfb;border:1px solid #d0d0d0;box-sizing:border-box;"></div>
<svg class="b" style="left:466.50px;top:768.20px;" width="4" height="6" viewBox="0 0 4 6"><path d="M4 0v6L0 3z" fill="#555"/></svg>
<div class="b " style="left:476.30px;top:764.50px;width:149.00px;height:13.50px;background:#fcfcfc;border:1px solid #cfcfcf;box-sizing:border-box;"></div>
<div class="b " style="left:717.90px;top:764.50px;width:12.30px;height:13.50px;background:#fbfbfb;border:1px solid #d0d0d0;box-sizing:border-box;"></div>
<svg class="b" style="left:722.40px;top:768.20px;" width="4" height="6" viewBox="0 0 4 6"><path d="M0 0v6l4-3z" fill="#555"/></svg>
<div class="b " style="left:0.00px;top:783.00px;width:750.00px;height:22.00px;background:#f3f3f3;"></div>
<div class="b " style="left:0.00px;top:783.00px;width:750.00px;height:1.00px;background:#dedede;"></div>
<span class="t " style="top:789.86px;font-size:10.30px;left:6.00px;letter-spacing:-0.455px;color:#444;">Ready</span>
<svg class="b" style="left:51.00px;top:788.30px;" width="12.5" height="11.5" viewBox="0 0 12.5 11.5"><circle cx="2.6" cy="2.6" r="2.2" fill="#555"/><path d="M6 .8h6v3.4H6z" fill="#555"/><path d="M.6 5.6h11.4v5.4H.6z M.6 8.3h11.4 M4.4 5.6v5.4 M8.2 5.6v5.4" fill="none" stroke="#555" stroke-width="1"/></svg>
<div class="b " style="left:476.00px;top:783.50px;width:32.00px;height:21.50px;background:#cfcfcf;"></div>
<svg class="b" style="left:485.50px;top:787.50px;" width="13" height="12.5" viewBox="0 0 13 12.5"><path d="M.5 .5h12v11.5H.5z M4.5 .5v11.5 M8.5 .5v11.5 M.5 4.3h12 M.5 8.2h12" fill="none" stroke="#555" stroke-width="1"/></svg>
<svg class="b" style="left:517.50px;top:787.50px;" width="13" height="12.5" viewBox="0 0 13 12.5"><path d="M.5 .5h12v11.5H.5z M3.5 3.3h6v6.4h-6z M5 5.5h3 M5 7.5h3" fill="none" stroke="#666" stroke-width="1"/></svg>
<svg class="b" style="left:550.50px;top:787.50px;" width="13" height="12.5" viewBox="0 0 13 12.5"><path d="M.5 .5h12v11.5H.5z M4.5 .5v6.5h4.2V.5" fill="none" stroke="#666" stroke-width="1"/></svg>
<div class="b " style="left:578.50px;top:793.60px;width:6.50px;height:1.40px;background:#555;"></div>
<div class="b " style="left:590.00px;top:794.00px;width:96.00px;height:1.00px;background:#9a9a9a;"></div>
<div class="b " style="left:635.30px;top:787.50px;width:3.80px;height:13.50px;background:#595959;"></div>
<div class="b " style="left:689.30px;top:793.60px;width:7.60px;height:1.30px;background:#444;"></div>
<div class="b " style="left:692.40px;top:790.40px;width:1.30px;height:7.60px;background:#444;"></div>
<span class="t " style="top:790.20px;font-size:10.00px;left:706.00px;letter-spacing:-0.144px;color:#555;">100%</span>
</div>
<div class="b" style="left:0;top:805px;width:1500px;height:39px;background:#121212;overflow:hidden">
<svg class="b" style="left:15.50px;top:11.50px;" width="16" height="16" viewBox="0 0 16 16"><path d="M0 2.3L6.6 1.4v6.2H0z M7.6 1.2L16 0v7.6H7.6z M0 8.6h6.6v6.2L0 13.9z M7.6 8.6H16V16l-8.4-1.2z" fill="#fff"/></svg>
<div class="b " style="left:47.00px;top:0.00px;width:335.70px;height:39.00px;background:#f0f0f0;border-top:1px solid #d4d4d4;box-sizing:border-box;"></div>
<svg class="b" style="left:55.00px;top:9.00px;" width="22" height="22" viewBox="0 0 22 22"><circle cx="11" cy="11" r="9" fill="none" stroke="#111" stroke-width="2.6"/></svg>
<span class="t " style="top:13.47px;font-size:14.20px;left:86.70px;letter-spacing:-0.390px;color:#3a3a3a;">Type here to search</span>
<svg class="b" style="left:357.00px;top:11.00px;" width="12" height="18" viewBox="0 0 12 18"><path d="M3.800 3a2.200 2.200 0 0 1 4.400 0v5.500a2.200 2.200 0 0 1-4.400 0z" fill="none" stroke="#222" stroke-width="1.300"/><path d="M4.200 6.500h3.600v2a1.800 1.800 0 0 1-3.600 0z" fill="#333"/><path d="M1.200 8.500c0 6 9.600 6 9.600 0 M6 13.200V16.600 M3.200 16.800h5.600" fill="none" stroke="#222" stroke-width="1.200"/></svg>
<svg class="b" style="left:397.50px;top:11.50px;" width="19" height="15" viewBox="0 0 19 15"><path d="M1.500 0v15 M11 0v15" fill="none" stroke="#cfcfcf" stroke-width="1.500"/><path d="M.5 1h11.500 M1.500 5.300h9.500 M1.500 9.700h9.500 M.500 14h11.500" fill="none" stroke="#cfcfcf" stroke-width="1.300"/><path d="M15.500 1.200v1.800 M15.500 5.200v2.200 M15.500 9.600v1.800" stroke="#f4f4f4" stroke-width="1.500"/></svg>
<svg class="b" style="left:445.70px;top:8.70px;" width="20.5" height="20.5" viewBox="0 0 24 24"><path d="M19 17.600A8 8 0 1 1 20.300 11.900H7.500" fill="none" stroke="#2a7bd2" stroke-width="4.600"/><path d="M4.500 9C6 4 12 1.800 17 4.500" fill="none" stroke="#5aa2e6" stroke-width="1.600"/></svg>
<svg class="b" style="left:493.00px;top:9.00px;" width="23" height="20" viewBox="0 0 23 20"><path d="M0 2.5h8l2 2h13V19H0z" fill="#e9b94a"/><path d="M0 6.5h23V19H0z" fill="#f6d36b"/><path d="M4 11h15v8H4z" fill="#3f8fd8"/><path d="M7.5 14h8v5h-8z" fill="#f6d36b"/></svg>
<div class="b " style="left:485.40px;top:37.00px;width:39.00px;height:2.00px;background:#8cc4f2;"></div>
<svg class="b" style="left:541.00px;top:7.50px;" width="23" height="24" viewBox="0 0 23 24"><path d="M7 7V5a4.5 4.5 0 0 1 9 0v2" fill="none" stroke="#2f7bd0" stroke-width="1.6"/><path d="M1 7h21v16H1z" fill="#f1f1f1"/><path d="M7 11h4v4H7z" fill="#e8562f"/><path d="M12 11h4v4h-4z" fill="#7cbb2b"/><path d="M7 16h4v4H7z" fill="#2ba3e8"/><path d="M12 16h4v4h-4z" fill="#f4b91c"/></svg>
<svg class="b" style="left:590.00px;top:9.50px;" width="24" height="19" viewBox="0 0 24 19"><path d="M0 7L12 0l12 7v12H0z" fill="#f3f3f3"/><path d="M0 7l12 6.5L24 7" fill="none" stroke="#1b1b1b" stroke-width="1.6"/></svg>
<div class="b " style="left:600.00px;top:19.50px;width:24.50px;height:15.50px;background:#151515;border:1.2px solid #c9c9c9;border-radius:8px;box-sizing:border-box;"></div>
<span class="t " style="top:23.18px;font-size:9.60px;left:612.30px;transform:translateX(-50%);font-weight:700;color:#f0f0f0;">99+</span>
<svg class="b" style="left:643.00px;top:8.00px;" width="15" height="23" viewBox="0 0 15 23"><rect x="0" y="0" width="14" height="23" rx="1.5" fill="#2a86e2"/><rect x="0" y="0" width="7" height="23" fill="#1c6cc4"/></svg>
<div class="b " style="left:654.00px;top:19.50px;width:17.50px;height:15.50px;background:#151515;border:1.2px solid #c9c9c9;border-radius:8px;box-sizing:border-box;"></div>
<svg class="b" style="left:658.00px;top:24.00px;" width="10" height="7" viewBox="0 0 10 7"><path d="M.5 .5h9v6h-9z M.5 .5L5 4 9.500 .5" fill="none" stroke="#e8e8e8" stroke-width="1"/></svg>
<svg class="b" style="left:687.50px;top:8.50px;" width="23" height="23" viewBox="0 0 23 23"><circle cx="11.5" cy="11.5" r="11" fill="#dd4b3e"/><path d="M11.5 11.5L2 6A11 11 0 0 0 9 22.2z" fill="#2ea35a"/><path d="M11.5 11.5L9 22.2A11 11 0 0 0 22 8z" fill="#4a3a30"/><path d="M11.500 11.5L22 8A11 11 0 0 0 20 4.500z" fill="#f2c230"/><circle cx="11.5" cy="11.5" r="5" fill="#f1f1f1"/><circle cx="11.5" cy="11.5" r="3.900" fill="#3f7fe0"/><circle cx="16" cy="15.500" r="5" fill="#5a4a42" opacity=".85"/></svg>
<div class="b " style="left:679.00px;top:37.00px;width:40.00px;height:2.00px;background:#8cc4f2;"></div>
<svg class="b" style="left:735.50px;top:8.50px;" width="23" height="23" viewBox="0 0 23 23"><rect width="23" height="23" rx="6" fill="#e5484d"/><circle cx="11.5" cy="11.5" r="8.2" fill="#fbfbfb"/><path d="M6.600 7.5c1-1.600 3-.8 3.400.6l1.800 4.200 2.600-4.600c.8-1.300 2.800-.5 2.200 1l-3.400 6.600c-.9 1.700-3 1.700-3.900 0z" fill="#d83a40"/></svg>
<div class="b " style="left:727.00px;top:37.00px;width:40.00px;height:2.00px;background:#8cc4f2;"></div>
<div class="b " style="left:772.00px;top:0.50px;width:48.00px;height:39.00px;background:#3d3d3d;"></div>
<svg class="b" style="left:785.50px;top:10.00px;" width="22" height="20" viewBox="0 0 22 20"><rect x="5" y="0" width="17" height="20" rx="1.5" fill="#1f7a48"/><path d="M13.500 0v20 M5 6.600h17 M5 13.300h17" stroke="#2f9a60" stroke-width="1"/><rect x="0" y="4" width="12" height="12" rx="1.200" fill="#185c37"/><path d="M3.500 7l5 6M8.500 7l-5 6" stroke="#fff" stroke-width="1.500"/></svg>
<div class="b " style="left:772.00px;top:37.00px;width:48.00px;height:2.00px;background:#8cc4f2;"></div>
<svg class="b" style="left:831.00px;top:8.00px;" width="25" height="25" viewBox="0 0 25 25"><path d="M12 2l2.500 5 6-3-2 6 5.500 2-5.500 2 2 6-6-3-2.500 5-2.500-5-6 3 2-6L0 12l5.500-2-2-6 6 3z" fill="#b5460f"/><circle cx="12.500" cy="12.500" r="4.500" fill="#e98a1f"/><path d="M5 5l3 3M20 5l-3 3" stroke="#e7c9b0" stroke-width="1.500"/><rect x="10" y="10.500" width="5.500" height="4" fill="#5a2208"/></svg>
<div class="b " style="left:824.00px;top:37.00px;width:40.00px;height:2.00px;background:#8cc4f2;"></div>
<span class="t " style="top:13.70px;font-size:12.60px;left:1147.50px;letter-spacing:-0.632px;color:#d8d8d8;">Desktop</span>
<svg class="b" style="left:1197.00px;top:5.00px;" width="9" height="7" viewBox="0 0 9 7"><path d="M.600 .600l3 2.900-3 2.900 M4.600 .600l3 2.900-3 2.900" fill="none" stroke="#e8e8e8" stroke-width="1.200"/></svg>
<svg class="b" style="left:1226.50px;top:11.50px;" width="17" height="16" viewBox="0 0 17 16"><circle cx="10.500" cy="4" r="3" fill="none" stroke="#eee" stroke-width="1.300"/><path d="M5.500 14.500c0-7 10-7 10 0" fill="none" stroke="#eee" stroke-width="1.300"/><circle cx="4.500" cy="8" r="2.200" fill="none" stroke="#eee" stroke-width="1.200"/><path d="M.800 15c0-5 6.500-5 7 0" fill="none" stroke="#eee" stroke-width="1.200"/></svg>
<svg class="b" style="left:1267.00px;top:16.50px;" width="13" height="8" viewBox="0 0 13 8"><path d="M.800 7L6.500 1.200 12.200 7" fill="none" stroke="#eee" stroke-width="1.400"/></svg>
<svg class="b" style="left:1296.50px;top:14.50px;" width="17" height="11" viewBox="0 0 17 11"><path d="M3 .600h13.400v9.800H3z" fill="none" stroke="#eee" stroke-width="1.200"/><path d="M5 3h1.500 M8 3h1.500 M11 3h1.500 M13.800 3h1 M5 5.500h1.500 M8 5.500h1.500 M11 5.500h1.500 M6 8h7.500" stroke="#eee" stroke-width="1.300"/><path d="M.600 1v8" stroke="#eee" stroke-width="1.200"/></svg>
<svg class="b" style="left:1328.50px;top:12.50px;" width="16" height="15" viewBox="0 0 16 15"><path d="M1 14A13 13 0 0 1 14 1" fill="none" stroke="#999" stroke-width="1.300"/><path d="M4.500 14A9.500 9.500 0 0 1 14 4.500" fill="none" stroke="#ddd" stroke-width="1.300"/><path d="M8 14a6 6 0 0 1 6-6" fill="none" stroke="#eee" stroke-width="1.300"/><circle cx="12.800" cy="12.800" r="1.500" fill="#eee"/></svg>
<svg class="b" style="left:1357.00px;top:13.00px;" width="17" height="14" viewBox="0 0 17 14"><path d="M.700 4.500h3L7.500 1v12L3.700 9.500h-3z" fill="none" stroke="#eee" stroke-width="1.200"/><path d="M10 4.500c1.300 1.300 1.300 3.700 0 5 M12.300 2.500c2.500 2.500 2.500 6.500 0 9" fill="none" stroke="#eee" stroke-width="1.100"/></svg>
<span class="t " style="top:5.96px;font-size:11.60px;left:1393.00px;letter-spacing:-0.386px;color:#e6e6e6;">11:33 PM</span>
<span class="t " style="top:22.96px;font-size:11.60px;left:1389.00px;letter-spacing:0.155px;color:#e6e6e6;">6/14/2019</span>
<svg class="b" style="left:1460.00px;top:11.00px;" width="16" height="15" viewBox="0 0 16 15"><path d="M.600 .600h14.800v10.800H6l-3 3v-3H.600z" fill="#e4e4e4"/><path d="M3 3.600h10 M3 6h10 M3 8.400h10" stroke="#222" stroke-width="1"/></svg>
<div class="b " style="left:1467.00px;top:19.50px;width:17.50px;height:16.00px;background:#151515;border:1.200px solid #c9c9c9;border-radius:8px;box-sizing:border-box;"></div>
<span class="t " style="top:23.38px;font-size:9.60px;left:1475.80px;transform:translateX(-50%);font-weight:700;color:#f0f0f0;">22</span>
<div class="b " style="left:1495.00px;top:0.00px;width:1.00px;height:39.00px;background:#555;"></div>
</div>
<div class="b " style="left:0.00px;top:0.00px;width:1500.00px;height:844.00px;background:rgba(0,0,0,0.29);"></div>
<svg class="b" style="left:0.00px;top:0.00px;pointer-events:none;" width="1500" height="844" viewBox="0 0 1500 844"><path d="M381.700 60.800L282 136" stroke="#f0e63c" stroke-width="4.600" stroke-linecap="round"/><circle cx="381.700" cy="60.800" r="5.200" fill="#f0e63c"/></svg>
<div class="b " style="left:245.40px;top:132.40px;width:64.80px;height:30.80px;background:#f1f1f1;border:4px solid #f0e63c;border-radius:4px;box-sizing:border-box;"></div>
<span class="t " style="top:139.03px;font-size:19.50px;left:277.80px;transform:translateX(-50%);color:#2a2a2a;letter-spacing:-0.1px;-webkit-text-stroke:0.7px #2a2a2a;">View</span>
</div></body></html>
